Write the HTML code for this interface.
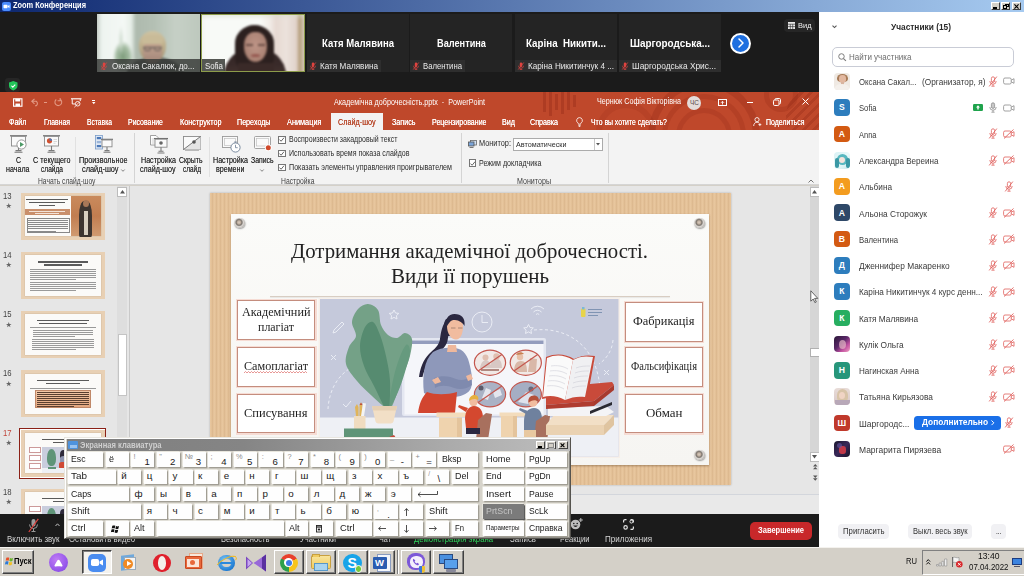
<!DOCTYPE html>
<html lang="ru">
<head>
<meta charset="utf-8">
<title>Zoom Конференция</title>
<style>
*{box-sizing:border-box;margin:0;padding:0}
html,body{width:1024px;height:576px;overflow:hidden;background:#d4d0c8}
body{font-family:"Liberation Sans","DejaVu Sans",sans-serif;font-size:8px;color:#222;position:relative}
.a{position:absolute}
.t{position:absolute;white-space:nowrap;line-height:1.15;transform-origin:0 50%}
svg{position:absolute;overflow:visible}

</style>
</head>
<body>

<div class="a" style="left:0;top:0;width:1024px;height:12px;background:linear-gradient(90deg,#0e2870 0%,#a6caf0 100%)"></div>
<svg style="left:2px;top:2px" width="9" height="9" viewBox="0 0 18 18"><rect width="18" height="18" rx="4" fill="#4a8cff"/><rect x="3" y="5.5" width="8" height="7" rx="1.5" fill="#fff"/><path d="M11.5 8l3.5-2.2v6.4L11.5 10z" fill="#fff"/></svg>
<span class="t" style="left:13.0px;top:1.3px;font-size:8.2px;color:#fff;font-weight:bold;transform:scaleX(0.907);">Zoom Конференция</span>
<div class="a" style="left:991px;top:2px;width:9px;height:8px;background:#d4d0c8;border:1px solid;border-color:#fff #404040 #404040 #fff"><div class="a" style="left:1px;top:4px;width:4px;height:1.5px;background:#000"></div></div>
<div class="a" style="left:1001px;top:2px;width:9px;height:8px;background:#d4d0c8;border:1px solid;border-color:#fff #404040 #404040 #fff"><div class="a" style="left:2.5px;top:0.5px;width:4px;height:3.5px;border:1px solid #000;border-top-width:1.5px"></div><div class="a" style="left:1px;top:2px;width:4px;height:3.5px;border:1px solid #000;border-top-width:1.5px;background:#d4d0c8"></div></div>
<div class="a" style="left:1012px;top:2px;width:9px;height:8px;background:#d4d0c8;border:1px solid;border-color:#fff #404040 #404040 #fff"><svg style="left:1px;top:0.5px" width="5" height="5" viewBox="0 0 6 6"><path d="M0.5 0.5L5.5 5.5M5.5 0.5L0.5 5.5" stroke="#000" stroke-width="1.4"/></svg></div>

<div class="a" style="left:0;top:12px;width:820px;height:80px;background:#1b1b1b"></div>
<!-- video 1 -->
<div class="a" style="left:97.300px;top:14.200px;width:103px;height:57.500px;overflow:hidden;background:#c0cbc0">
 <div class="a" style="left:-3px;top:-3px;width:110px;height:64px;filter:blur(1.2px);background:linear-gradient(90deg,#9aa49a 0,#c8d0c8 3px,#eef4f0 8px,#f4f8f5 30px,#e6eee8 37px,#aebaae 42px,#b4c0b4 60px,#c6d0c6 82px,#bcc7bc 110px)">
  <div class="a" style="left:19px;top:30px;width:20px;height:32px;border-radius:50%;background:radial-gradient(ellipse at center,#7e9c7c 0,#a4bca2 45%,rgba(220,232,222,0) 72%)"></div>
  <div class="a" style="left:24px;top:14px;width:6px;height:30px;background:radial-gradient(ellipse at center,#cfdccf 0,rgba(230,240,232,0) 70%)"></div>
  <div class="a" style="left:32px;top:46px;width:58px;height:24px;border-radius:50% 50% 0 0/80% 80% 0 0;background:#5f645f"></div>
  <div class="a" style="left:44.500px;top:19.500px;width:27.500px;height:31px;border-radius:50% 50% 42% 42%/45% 45% 55% 55%;background:linear-gradient(180deg,#cfc3a2 0,#c2b390 40%,#a39274 100%)"></div>
  <div class="a" style="left:48.500px;top:28.500px;width:19.500px;height:24px;border-radius:42% 42% 50% 50%;background:linear-gradient(180deg,#c4a58f,#b39585 55%,#a08476)"></div>
  <div class="a" style="left:47.500px;top:24px;width:21px;height:9px;border-radius:50% 50% 20% 20%;background:#c9bb98"></div>
  <div class="a" style="left:49px;top:35.500px;width:18.500px;height:1.500px;background:#5e5854"></div>
  <div class="a" style="left:50px;top:35.500px;width:7px;height:4.500px;border:.8px solid #5e5854;border-radius:1.500px"></div>
  <div class="a" style="left:59.500px;top:35.500px;width:7px;height:4.500px;border:.8px solid #5e5854;border-radius:1.500px"></div>
 </div>
 <div class="a" style="left:0;top:45px;width:103px;height:13px;background:rgba(54,56,54,.82)"></div>
</div>
<svg style="left:100px;top:61.8px" width="8" height="8" viewBox="0 0 16 16"><rect x="5.5" y="1" width="5" height="9" rx="2.5" fill="#e0433f"/><path d="M3 7.5a5 5 0 0 0 10 0M8 12.5V15M5.5 15h5" stroke="#e0433f" stroke-width="1.4" fill="none"/><path d="M13.5 1L2.5 15" stroke="#e0433f" stroke-width="1.6"/></svg>
<span class="t" style="left:112.0px;top:60.8px;font-size:8.9px;color:#ececec;transform:scaleX(0.905);">Оксана Сакалюк, до...</span>
<!-- video 2 -->
<div class="a" style="left:201px;top:14px;width:104px;height:58px;overflow:hidden;background:#f6f8f5">
 <div class="a" style="left:-3px;top:-3px;width:110px;height:64px;filter:blur(1.300px);background:linear-gradient(180deg,rgba(214,222,208,.9) 0,rgba(240,244,238,0) 9px),linear-gradient(90deg,#eef1ec 0,#f8faf7 8px,#f9faf8 62px,#f1ebe6 72px,#e6d9d2 78px,#ece2dc 88px,#e2d4cc 98px,#b49c78 102px,#c8b8a0 104px,#e4dcd4 110px)">
  <div class="a" style="left:26px;top:36px;width:62px;height:40px;border-radius:50% 50% 10% 10%/70% 70% 10% 10%;background:linear-gradient(180deg,#2f2322 0,#3a2b2a 45%,#4c3a32 100%)"></div>
  <div class="a" style="left:37px;top:13.500px;width:39px;height:46px;border-radius:50% 50% 30% 30%/40% 40% 30% 30%;background:#2c201f"></div>
  <div class="a" style="left:45.500px;top:20.500px;width:23.500px;height:30px;border-radius:44% 44% 50% 50%;background:radial-gradient(ellipse at 50% 45%,#bd9486 0,#ad8577 60%,#86604f 100%)"></div>
  <div class="a" style="left:47.500px;top:33px;width:7px;height:1.800px;background:#6e5048"></div><div class="a" style="left:59.500px;top:33px;width:7px;height:1.800px;background:#6e5048"></div>
  <div class="a" style="left:53px;top:43px;width:8.500px;height:3px;border-radius:50%;background:#965850"></div>
  <div class="a" style="left:40px;top:52px;width:36px;height:12px;background:#3a2a28"></div>
 </div>
 <div class="a" style="left:0;top:45px;width:24px;height:13px;background:rgba(62,64,60,.88)"></div>
 <div class="a" style="left:0;top:0;width:104px;height:58px;border:1px solid #8c9c4a"></div>
</div>
<span class="t" style="left:204.8px;top:60.8px;font-size:8.9px;color:#f0f0f0;transform:scaleX(0.890);">Sofia</span>
<div class="a" style="left:307px;top:14px;width:102px;height:58px;background:#242424"></div>
<div class="a" style="left:307px;top:60px;width:74px;height:12px;background:#2e2e2e"></div>
<svg style="left:309px;top:62px" width="8" height="8" viewBox="0 0 16 16"><rect x="5.5" y="1" width="5" height="9" rx="2.5" fill="#e0433f"/><path d="M3 7.5a5 5 0 0 0 10 0M8 12.5V15M5.5 15h5" stroke="#e0433f" stroke-width="1.4" fill="none"/><path d="M13.5 1L2.5 15" stroke="#e0433f" stroke-width="1.6"/></svg>
<span class="t" style="left:322.0px;top:37.3px;font-size:10.5px;color:#fff;font-weight:bold;transform:scaleX(0.909);">Катя Малявина</span>
<span class="t" style="left:320.0px;top:60.8px;font-size:8.9px;color:#e8e8e8;transform:scaleX(0.918);">Катя Малявина</span>
<div class="a" style="left:410px;top:14px;width:102px;height:58px;background:#242424"></div>
<div class="a" style="left:410px;top:60px;width:55px;height:12px;background:#2e2e2e"></div>
<svg style="left:412px;top:62px" width="8" height="8" viewBox="0 0 16 16"><rect x="5.5" y="1" width="5" height="9" rx="2.5" fill="#e0433f"/><path d="M3 7.5a5 5 0 0 0 10 0M8 12.5V15M5.5 15h5" stroke="#e0433f" stroke-width="1.4" fill="none"/><path d="M13.5 1L2.5 15" stroke="#e0433f" stroke-width="1.6"/></svg>
<span class="t" style="left:436.5px;top:37.3px;font-size:10.5px;color:#fff;font-weight:bold;transform:scaleX(0.876);">Валентина</span>
<span class="t" style="left:423.0px;top:60.8px;font-size:8.9px;color:#e8e8e8;transform:scaleX(0.872);">Валентина</span>
<div class="a" style="left:514.5px;top:14px;width:102.5px;height:58px;background:#242424"></div>
<div class="a" style="left:514.5px;top:60px;width:102.5px;height:12px;background:#2e2e2e"></div>
<svg style="left:516.5px;top:62px" width="8" height="8" viewBox="0 0 16 16"><rect x="5.5" y="1" width="5" height="9" rx="2.5" fill="#e0433f"/><path d="M3 7.5a5 5 0 0 0 10 0M8 12.5V15M5.5 15h5" stroke="#e0433f" stroke-width="1.4" fill="none"/><path d="M13.5 1L2.5 15" stroke="#e0433f" stroke-width="1.6"/></svg>
<span class="t" style="left:525.8px;top:37.3px;font-size:10.5px;color:#fff;font-weight:bold;transform:scaleX(0.932);">Каріна&nbsp; Никити...</span>
<span class="t" style="left:527.5px;top:60.8px;font-size:8.9px;color:#e8e8e8;transform:scaleX(0.918);">Каріна Никитинчук 4 ...</span>
<div class="a" style="left:619px;top:14px;width:102px;height:58px;background:#242424"></div>
<div class="a" style="left:619px;top:60px;width:102px;height:12px;background:#2e2e2e"></div>
<svg style="left:621px;top:62px" width="8" height="8" viewBox="0 0 16 16"><rect x="5.5" y="1" width="5" height="9" rx="2.5" fill="#e0433f"/><path d="M3 7.5a5 5 0 0 0 10 0M8 12.5V15M5.5 15h5" stroke="#e0433f" stroke-width="1.4" fill="none"/><path d="M13.5 1L2.5 15" stroke="#e0433f" stroke-width="1.6"/></svg>
<span class="t" style="left:630.0px;top:37.3px;font-size:10.5px;color:#fff;font-weight:bold;transform:scaleX(0.943);">Шаргородська...</span>
<span class="t" style="left:632.0px;top:60.8px;font-size:8.9px;color:#e8e8e8;transform:scaleX(0.943);">Шаргородська Хрис...</span>
<div class="a" style="left:730px;top:32.500px;width:21px;height:21px;border-radius:50%;background:#1e6fe0;border:2px solid #fff"></div>
<svg style="left:737px;top:38px" width="8" height="10" viewBox="0 0 8 10"><path d="M2 1l4 4-4 4" stroke="#fff" stroke-width="1.5" fill="none" stroke-linecap="round" stroke-linejoin="round"/></svg>
<div class="a" style="left:784px;top:19px;width:31px;height:13px;border-radius:4px;background:#262626"></div>
<svg style="left:787.5px;top:22px" width="7" height="7" viewBox="0 0 7 7"><rect width="7" height="7" fill="#e8e8e8"/><path d="M0 2.2h7M2.3 2.2v5M4.7 2.2v5M0 4.6h7" stroke="#262626" stroke-width=".6"/></svg>
<span class="t" style="left:797.5px;top:20.9px;font-size:8px;color:#f0f0f0;transform:scaleX(0.932);">Вид</span>
<!-- shield -->
<div class="a" style="left:5px;top:78px;width:15px;height:14px;border-radius:3px;background:#262626"></div>
<svg style="left:8.5px;top:81px" width="8.5" height="9.5" viewBox="0 0 9 10"><path d="M4.5 0L9 1.6v3.6c0 2.4-2 4.1-4.5 4.8C2 9.300 0 7.600 0 5.200V1.600z" fill="#23c55a"/><path d="M2.500 5l1.500 1.500 2.600-2.800" stroke="#fff" stroke-width="1.100" fill="none"/></svg>


<div class="a" style="left:0;top:92px;width:820px;height:38px;background:#bf482b;overflow:hidden">
  <!-- decorative pattern -->
  <div class="a" style="left:543px;top:0;width:3px;height:20px;background:rgba(140,36,18,.32)"></div>
  <div class="a" style="left:549px;top:0;width:3px;height:24px;background:rgba(140,36,18,.32)"></div>
  <div class="a" style="left:555px;top:2px;width:3px;height:16px;background:rgba(140,36,18,.32)"></div>
  <div class="a" style="left:561px;top:0;width:3px;height:22px;background:rgba(140,36,18,.32)"></div>
  <div class="a" style="left:567px;top:0;width:3px;height:18px;background:rgba(140,36,18,.32)"></div>
  <div class="a" style="left:573px;top:3px;width:3px;height:12px;background:rgba(140,36,18,.32)"></div>
  <div class="a" style="left:648px;top:-12px;width:112px;height:112px;border-radius:50%;border:7px solid rgba(140,36,18,.26)"></div>
  <div class="a" style="left:662px;top:2px;width:84px;height:84px;border-radius:50%;border:5px solid rgba(140,36,18,.22)"></div>
  <div class="a" style="left:676px;top:16px;width:56px;height:56px;border-radius:50%;border:5px solid rgba(140,36,18,.2)"></div>
  <div class="a" style="left:596px;top:10px;width:60px;height:60px;border-radius:50%;border:6px solid rgba(140,36,18,.16)"></div>
  <div class="a" style="left:764px;top:-14px;width:34px;height:34px;border-radius:50%;border:5px solid rgba(140,36,18,.22)"></div>
  <div class="a" style="left:786px;top:-6px;width:60px;height:60px;border-radius:50%;background:repeating-linear-gradient(135deg,rgba(140,36,18,.28) 0 3px,transparent 3px 7px)"></div>
</div>
<!-- quick access -->
<svg style="left:13px;top:98px" width="9.5" height="9" viewBox="0 0 10 9"><rect x=".6" y=".6" width="8.8" height="7.8" fill="none" stroke="#fff" stroke-width="1.2"/><rect x="2.4" y=".6" width="5.2" height="2.8" fill="#fff"/><rect x="2.6" y="5.6" width="4.8" height="2.8" fill="#fff"/></svg>
<svg style="left:31px;top:98px" width="9" height="8" viewBox="0 0 9 8"><path d="M3.5.8L.8 3.3l2.7 2.5M1 3.3h4.2a2.6 2.6 0 0 1 0 4.4H4" stroke="#e39a85" stroke-width="1.1" fill="none"/></svg>
<div class="a" style="left:44px;top:102px;width:2.5px;height:1px;background:#e39a85"></div>
<svg style="left:54px;top:97.5px" width="8.5" height="8.5" viewBox="0 0 9 9"><path d="M6.3 1.3A3.6 3.6 0 1 1 2.4 1.6M6.5 0v2.8H3.8" stroke="#e39a85" stroke-width="1.1" fill="none"/></svg>
<svg style="left:71px;top:97.5px" width="10.5" height="10" viewBox="0 0 11 10"><path d="M0 .6h11" stroke="#fff" stroke-width="1.2"/><path d="M1.3 1v5h3M9.7 1v2" stroke="#fff" stroke-width="1" fill="none"/><circle cx="7" cy="5.8" r="2.4" fill="none" stroke="#fff" stroke-width=".9"/><path d="M5.3 7.5L8.7 4.1M3.5 9.5l2-2" stroke="#fff" stroke-width=".8"/></svg>
<div class="a" style="left:91.5px;top:100.3px;width:3.5px;height:1px;background:#fff"></div>
<svg style="left:91.5px;top:102px" width="3.5" height="2.5" viewBox="0 0 4 3"><path d="M0 0h4L2 2.6z" fill="#fff"/></svg>
<span class="t" style="left:333.5px;top:97.5px;font-size:8.3px;color:#fff;transform:scaleX(0.867);">Академічна доброчесність.pptx&nbsp; -&nbsp; PowerPoint</span>
<span class="t" style="left:597.0px;top:97.0px;font-size:8.3px;color:#fff;transform:scaleX(0.865);">Чернюк Софія Вікторівна</span>
<div class="a" style="left:687px;top:95.5px;width:14px;height:14px;border-radius:50%;background:#e4dcda"></div>
<span class="t" style="left:689.9px;top:98.9px;font-size:6.4px;color:#5a4a48;">ЧС</span>
<svg style="left:718px;top:98.5px" width="9" height="7" viewBox="0 0 9 7"><rect x=".5" y=".5" width="8" height="6" fill="none" stroke="#fff" stroke-width="1"/><path d="M4.5 5.5v-3M3 3.8l1.5-1.5L6 3.8" stroke="#fff" stroke-width=".9" fill="none"/></svg>
<div class="a" style="left:747px;top:101.5px;width:6px;height:1px;background:#fff"></div>
<svg style="left:773px;top:98px" width="8" height="8" viewBox="0 0 8 8"><rect x=".5" y="2" width="5.5" height="5.5" rx="1.2" fill="none" stroke="#fff" stroke-width="1"/><path d="M2 2V1.7A1.2 1.2 0 0 1 3.2.5h3.1A1.2 1.2 0 0 1 7.5 1.7v3.1A1.2 1.2 0 0 1 6.3 6" fill="none" stroke="#fff" stroke-width="1"/></svg>
<svg style="left:802px;top:98px" width="7" height="7" viewBox="0 0 7 7"><path d="M.5.5l6 6M6.5.5l-6 6" stroke="#fff" stroke-width="1"/></svg>
<!-- tabs -->
<span class="t" style="left:9.0px;top:117.8px;font-size:8.3px;color:#fff;transform:scaleX(0.858);text-shadow:0 0 .5px #fff;">Файл</span>
<span class="t" style="left:44.0px;top:117.8px;font-size:8.3px;color:#fff;transform:scaleX(0.823);text-shadow:0 0 .5px #fff;">Главная</span>
<span class="t" style="left:86.5px;top:117.8px;font-size:8.3px;color:#fff;transform:scaleX(0.811);text-shadow:0 0 .5px #fff;">Вставка</span>
<span class="t" style="left:128.0px;top:117.8px;font-size:8.3px;color:#fff;transform:scaleX(0.837);text-shadow:0 0 .5px #fff;">Рисование</span>
<span class="t" style="left:179.5px;top:117.8px;font-size:8.3px;color:#fff;transform:scaleX(0.877);text-shadow:0 0 .5px #fff;">Конструктор</span>
<span class="t" style="left:237.0px;top:117.8px;font-size:8.3px;color:#fff;transform:scaleX(0.861);text-shadow:0 0 .5px #fff;">Переходы</span>
<span class="t" style="left:287.0px;top:117.8px;font-size:8.3px;color:#fff;transform:scaleX(0.886);text-shadow:0 0 .5px #fff;">Анимация</span>
<div class="a" style="left:330.5px;top:113px;width:52.5px;height:18px;background:#f3f3f3"></div>
<span class="t" style="left:338.0px;top:117.8px;font-size:8.3px;color:#b7472a;transform:scaleX(0.872);text-shadow:0 0 .5px #b7472a;">Слайд-шоу</span>
<span class="t" style="left:391.5px;top:117.8px;font-size:8.3px;color:#fff;transform:scaleX(0.863);text-shadow:0 0 .5px #fff;">Запись</span>
<span class="t" style="left:431.5px;top:117.8px;font-size:8.3px;color:#fff;transform:scaleX(0.851);text-shadow:0 0 .5px #fff;">Рецензирование</span>
<span class="t" style="left:502.0px;top:117.8px;font-size:8.3px;color:#fff;transform:scaleX(0.866);text-shadow:0 0 .5px #fff;">Вид</span>
<span class="t" style="left:530.0px;top:117.8px;font-size:8.3px;color:#fff;transform:scaleX(0.860);text-shadow:0 0 .5px #fff;">Справка</span>
<svg style="left:575.5px;top:116.5px" width="7" height="10" viewBox="0 0 7 10"><path d="M3.5.6a2.9 2.9 0 0 0-1.6 5.3c.3.3.5.7.5 1.3h2.2c0-.6.2-1 .5-1.3A2.9 2.9 0 0 0 3.5.6zM2.4 8.4h2.2M2.7 9.5h1.6" stroke="#fff" stroke-width=".8" fill="none"/></svg>
<span class="t" style="left:591.0px;top:117.8px;font-size:8.3px;color:#fff;transform:scaleX(0.828);text-shadow:0 0 .5px #fff;">Что вы хотите сделать?</span>
<svg style="left:753px;top:117px" width="9" height="9.5" viewBox="0 0 9 10"><circle cx="4" cy="2.8" r="2.2" fill="none" stroke="#fff" stroke-width=".9"/><path d="M.5 9.5c0-2.4 1.5-4 3.5-4 .8 0 1.5.2 2 .7M7 6.5v3M5.5 8h3" stroke="#fff" stroke-width=".9" fill="none"/></svg>
<span class="t" style="left:766.0px;top:117.8px;font-size:8.3px;color:#fff;transform:scaleX(0.840);text-shadow:0 0 .5px #fff;">Поделиться</span>
<!-- ribbon -->
<div class="a" style="left:0;top:130px;width:820px;height:55px;background:#f3f3f3;border-bottom:1px solid #d5d5d5"></div>
<svg style="left:10px;top:135px" width="17" height="18" viewBox="0 0 17 18"><path d="M0 .8h17" stroke="#6a6a6a" stroke-width="1.2"/><rect x="1.5" y="1.4" width="14" height="9.6" fill="#fafafa" stroke="#8a8a8a" stroke-width=".9"/><path d="M8.5 11v4.5M4.5 17.3h8M5.5 15.6h6" stroke="#7a7a7a" stroke-width="1.1"/><circle cx="11.5" cy="9.5" r="4.6" fill="#fff" stroke="#8a8a8a" stroke-width=".9"/><path d="M10 7l4 2.5-4 2.5z" fill="#4d9a67"/></svg>
<span class="t" style="left:16.0px;top:155.8px;font-size:8.3px;color:#333;transform:scaleX(0.833);text-shadow:0 0 .4px #555;">С</span>
<span class="t" style="left:6.2px;top:164.8px;font-size:8.3px;color:#333;transform:scaleX(0.857);text-shadow:0 0 .4px #555;">начала</span>
<svg style="left:43px;top:135px" width="17" height="18" viewBox="0 0 17 18"><path d="M0 .8h17" stroke="#6a6a6a" stroke-width="1.2"/><rect x="1.5" y="1.4" width="14" height="9.6" fill="#fafafa" stroke="#8a8a8a" stroke-width=".9"/><path d="M8.5 11v4.5M4.5 17.3h8M5.5 15.6h6" stroke="#7a7a7a" stroke-width="1.1"/><circle cx="6.5" cy="5.8" r="2.6" fill="#d0502f"/><path d="M6.5 5.8V3.2a2.6 2.6 0 0 1 2.6 2.6z" fill="#4a78b8"/><path d="M10.5 4.5h3.5M10.5 6.5h3.5M10.5 8.3h2" stroke="#c8c8c8" stroke-width=".7"/></svg>
<span class="t" style="left:32.5px;top:155.8px;font-size:8.3px;color:#333;transform:scaleX(0.866);text-shadow:0 0 .4px #555;">С текущего</span>
<span class="t" style="left:40.5px;top:164.8px;font-size:8.3px;color:#333;transform:scaleX(0.794);text-shadow:0 0 .4px #555;">слайда</span>
<div class="a" style="left:75px;top:137px;width:1px;height:40px;background:#e1e1e1"></div>
<svg style="left:95px;top:135px" width="18" height="18" viewBox="0 0 18 18"><rect x=".5" y=".5" width="7" height="13.5" fill="#dfe8f4" stroke="#7a9cc8" stroke-width=".8"/><rect x="1.8" y="2" width="4.4" height="2.2" fill="#4a78b8"/><rect x="1.8" y="6" width="4.4" height="2.2" fill="#9ab4d8"/><rect x="1.8" y="10" width="4.4" height="2.2" fill="#4a78b8"/><path d="M6 4.3h12" stroke="#6a6a6a" stroke-width="1.1"/><rect x="7" y="5" width="10" height="6.8" fill="#fafafa" stroke="#8a8a8a" stroke-width=".9"/><path d="M12 12v3.5M8.5 17.3h7M9.5 15.6h5" stroke="#7a7a7a" stroke-width="1.1"/></svg>
<span class="t" style="left:78.5px;top:155.8px;font-size:8.3px;color:#333;transform:scaleX(0.876);text-shadow:0 0 .4px #555;">Произвольное</span>
<span class="t" style="left:81.5px;top:164.8px;font-size:8.3px;color:#333;transform:scaleX(0.887);text-shadow:0 0 .4px #555;">слайд-шоу</span>
<svg style="left:120.5px;top:168.5px" width="4" height="3" viewBox="0 0 4 3"><path d="M.3.5L2 2.3 3.7.5" stroke="#555" stroke-width=".7" fill="none"/></svg>
<span class="t" style="left:38.0px;top:176.7px;font-size:8.3px;color:#3e3e3e;transform:scaleX(0.812);">Начать слайд-шоу</span>
<div class="a" style="left:133.5px;top:133px;width:1px;height:50px;background:#d4d4d4"></div>
<svg style="left:150px;top:134.5px" width="18" height="19" viewBox="0 0 18 19"><path d="M.5.5h5.5l2 2V10H.5z" fill="#fff" stroke="#8a8a8a" stroke-width=".8"/><path d="M1.8 4h3M1.8 6h3M1.8 8h3" stroke="#b0b0b0" stroke-width=".6"/><path d="M4 3.5h14" stroke="#6a6a6a" stroke-width="1.1"/><rect x="5" y="4.2" width="12" height="8" fill="#fafafa" stroke="#8a8a8a" stroke-width=".9"/><circle cx="11" cy="8" r="1.8" fill="#666"/><path d="M11 12.2v3.8M7.5 18h7M8.5 16.2h5" stroke="#7a7a7a" stroke-width="1.1"/></svg>
<span class="t" style="left:140.6px;top:155.8px;font-size:8.3px;color:#333;transform:scaleX(0.857);text-shadow:0 0 .4px #555;">Настройка</span>
<span class="t" style="left:140.1px;top:164.8px;font-size:8.3px;color:#333;transform:scaleX(0.862);text-shadow:0 0 .4px #555;">слайд-шоу</span>
<svg style="left:183px;top:136px" width="18" height="15" viewBox="0 0 18 15"><rect x=".5" y=".5" width="17" height="13" fill="#fafafa" stroke="#8a8a8a" stroke-width=".9"/><path d="M.5 13.5L17.5.5V13.5z" fill="#e4e4e4"/><path d="M.5 13.5L17.5.5" stroke="#6a6a6a" stroke-width=".9"/><circle cx="11" cy="6" r="1.8" fill="#555"/><path d="M2 14.5h14" stroke="#aaa" stroke-width=".8"/></svg>
<span class="t" style="left:179.4px;top:155.8px;font-size:8.3px;color:#333;transform:scaleX(0.830);text-shadow:0 0 .4px #555;">Скрыть</span>
<span class="t" style="left:182.6px;top:164.8px;font-size:8.3px;color:#333;transform:scaleX(0.779);text-shadow:0 0 .4px #555;">слайд</span>
<div class="a" style="left:208.5px;top:137px;width:1px;height:40px;background:#e1e1e1"></div>
<svg style="left:222px;top:136px" width="19" height="17" viewBox="0 0 19 17"><rect x=".5" y=".5" width="15" height="11" fill="#fafafa" stroke="#9a9a9a" stroke-width=".9"/><rect x="2.5" y="2.5" width="11" height="7" fill="none" stroke="#c0c0c0" stroke-width=".7"/><circle cx="13.5" cy="11.5" r="4.6" fill="#fff" stroke="#6c7e94" stroke-width=".9"/><path d="M13.5 8.8v2.9h2.2" stroke="#6c7e94" stroke-width=".8" fill="none"/><path d="M12.3 6h2.4" stroke="#6c7e94" stroke-width=".9"/></svg>
<span class="t" style="left:212.6px;top:155.8px;font-size:8.3px;color:#333;transform:scaleX(0.857);text-shadow:0 0 .4px #555;">Настройка</span>
<span class="t" style="left:215.9px;top:164.8px;font-size:8.3px;color:#333;transform:scaleX(0.859);text-shadow:0 0 .4px #555;">времени</span>
<svg style="left:254px;top:136px" width="18" height="16" viewBox="0 0 18 16"><rect x=".5" y=".5" width="16" height="12" rx="1" fill="#fafafa" stroke="#9a9a9a" stroke-width=".9"/><rect x="2.5" y="2.5" width="12" height="7.5" fill="none" stroke="#c0c0c0" stroke-width=".7"/><circle cx="14.3" cy="11.8" r="3.4" fill="#fff"/><circle cx="14.3" cy="11.8" r="2.5" fill="#d0492c"/></svg>
<span class="t" style="left:251.0px;top:155.8px;font-size:8.3px;color:#333;transform:scaleX(0.830);text-shadow:0 0 .4px #555;">Запись</span>
<svg style="left:260.4px;top:168.5px" width="4" height="3" viewBox="0 0 4 3"><path d="M.3.5L2 2.3 3.7.5" stroke="#555" stroke-width=".7" fill="none"/></svg>
<div class="a" style="left:278px;top:136.2px;width:7.6px;height:7.6px;border:1px solid #767676;background:#fff"></div><svg style="left:279.3px;top:137.4px" width="5.5" height="5" viewBox="0 0 6 5"><path d="M.5 2.6l1.8 1.8L5.5.5" stroke="#444" stroke-width=".9" fill="none"/></svg><span class="t" style="left:289.0px;top:135.4px;font-size:8.3px;color:#2b2b2b;transform:scaleX(0.844);">Воспроизвести закадровый текст</span>
<div class="a" style="left:278px;top:149.89999999999998px;width:7.6px;height:7.6px;border:1px solid #767676;background:#fff"></div><svg style="left:279.3px;top:151.1px" width="5.5" height="5" viewBox="0 0 6 5"><path d="M.5 2.6l1.8 1.8L5.5.5" stroke="#444" stroke-width=".9" fill="none"/></svg><span class="t" style="left:289.0px;top:149.1px;font-size:8.3px;color:#2b2b2b;transform:scaleX(0.848);">Использовать время показа слайдов</span>
<div class="a" style="left:278px;top:163.6px;width:7.6px;height:7.6px;border:1px solid #767676;background:#fff"></div><svg style="left:279.3px;top:164.8px" width="5.5" height="5" viewBox="0 0 6 5"><path d="M.5 2.6l1.8 1.8L5.5.5" stroke="#444" stroke-width=".9" fill="none"/></svg><span class="t" style="left:289.0px;top:162.8px;font-size:8.3px;color:#2b2b2b;transform:scaleX(0.860);">Показать элементы управления проигрывателем</span>
<span class="t" style="left:280.5px;top:176.7px;font-size:8.3px;color:#3e3e3e;transform:scaleX(0.820);">Настройка</span>
<div class="a" style="left:461px;top:133px;width:1px;height:50px;background:#d4d4d4"></div>
<svg style="left:468px;top:139.5px" width="9" height="8" viewBox="0 0 9 8"><rect x="2.5" y=".5" width="6" height="4.5" fill="#cfe0f4" stroke="#6a6a6a" stroke-width=".8"/><rect x=".5" y="2" width="5.5" height="4" fill="#7aa4d8" stroke="#555" stroke-width=".8"/><path d="M1.5 7.5h4" stroke="#555" stroke-width=".8"/></svg>
<span class="t" style="left:479.0px;top:139.0px;font-size:8.3px;color:#2b2b2b;transform:scaleX(0.887);">Монитор:</span>
<div class="a" style="left:513px;top:137.5px;width:90px;height:13.5px;background:#fff;border:1px solid #ababab"></div>
<div class="a" style="left:594px;top:138.5px;width:1px;height:11.5px;background:#c8c8c8"></div>
<svg style="left:596.3px;top:143px" width="4" height="2.5" viewBox="0 0 4 2.5"><path d="M0 0h4L2 2.5z" fill="#555"/></svg>
<span class="t" style="left:516.0px;top:139.5px;font-size:8.1px;color:#2b2b2b;transform:scaleX(0.892);">Автоматически</span>
<div class="a" style="left:468.5px;top:159.39999999999998px;width:7.6px;height:7.6px;border:1px solid #767676;background:#fff"></div><svg style="left:469.8px;top:160.6px" width="5.5" height="5" viewBox="0 0 6 5"><path d="M.5 2.6l1.8 1.8L5.5.5" stroke="#444" stroke-width=".9" fill="none"/></svg><span class="t" style="left:479.0px;top:158.6px;font-size:8.3px;color:#2b2b2b;transform:scaleX(0.859);">Режим докладчика</span>
<span class="t" style="left:517.0px;top:176.7px;font-size:8.3px;color:#3e3e3e;transform:scaleX(0.856);">Мониторы</span>
<div class="a" style="left:608px;top:133px;width:1px;height:50px;background:#d4d4d4"></div>
<svg style="left:808px;top:179px" width="6" height="4" viewBox="0 0 6 4"><path d="M.5 3.5L3 1l2.5 2.5" stroke="#555" stroke-width=".8" fill="none"/></svg>


<div class="a" style="left:0;top:186px;width:820px;height:334px;background:#e6e6e6"></div>
<div class="a" style="left:116.5px;top:186px;width:10.5px;height:334px;background:#dedede"></div>
<div class="a" style="left:128.7px;top:186px;width:1px;height:334px;background:#c9c9c9"></div>
<div class="a" style="left:117px;top:187px;width:10px;height:9.5px;background:#fff;border:1px solid #bcbcbc"></div>
<svg style="left:119.5px;top:190px" width="5" height="3.5" viewBox="0 0 5 3.5"><path d="M0 3.5L2.5 0 5 3.5z" fill="#555"/></svg>
<div class="a" style="left:117.5px;top:334px;width:9px;height:62px;background:#fff;border:1px solid #c4c4c4"></div>
<span class="t" style="left:3.0px;top:190.5px;font-size:9.2px;color:#444;transform:scaleX(0.840);">13</span><svg style="left:6px;top:203.1px" width="5.5" height="5.5" viewBox="0 0 10 10"><path d="M5 0l1.3 3.5H10L7 5.8 8.1 9.5 5 7.3 1.9 9.5 3 5.8 0 3.5h3.7z" fill="#666"/></svg><div class="a" style="left:21.2px;top:192.6px;width:83.6px;height:47.2px;background:#e8d0b4;overflow:hidden"><div class="a" style="left:3.6px;top:3.4px;width:76.4px;height:40.4px;background:#fbfaf8;box-shadow:0 0 1px rgba(0,0,0,.25)"></div><div class="a" style="left:0;top:0;width:84px;height:48px;filter:blur(.35px)"><div class="a" style="left:5px;top:6px;width:42px;height:1.2px;background:#5a5a5a"></div><div class="a" style="left:8px;top:9px;width:36px;height:1.2px;background:#5a5a5a"></div><div class="a" style="left:18px;top:12px;width:16px;height:1.2px;background:#5a5a5a"></div>
<div class="a" style="left:4px;top:16px;width:45px;height:6.5px;background:#c98f6c"></div><div class="a" style="left:8px;top:18px;width:36px;height:1px;background:#f3e3d8"></div><div class="a" style="left:14px;top:20px;width:24px;height:1px;background:#f3e3d8"></div>
<div class="a" style="left:5.5px;top:25.5px;width:43px;height:15px;border:.6px solid #888"></div><div class="a" style="left:7px;top:27.5px;width:40px;height:0.8px;background:#8a8a8a"></div><div class="a" style="left:7px;top:29.6px;width:40px;height:0.8px;background:#8a8a8a"></div><div class="a" style="left:7px;top:31.7px;width:40px;height:0.8px;background:#8a8a8a"></div><div class="a" style="left:7px;top:33.8px;width:40px;height:0.8px;background:#8a8a8a"></div><div class="a" style="left:7px;top:35.9px;width:40px;height:0.8px;background:#8a8a8a"></div><div class="a" style="left:7px;top:38px;width:28px;height:0.8px;background:#8a8a8a"></div>
<div class="a" style="left:50px;top:3.4px;width:30px;height:40.4px;background:linear-gradient(180deg,#c98a5c,#c17d50 50%,#d09a70)"></div>
<div class="a" style="left:58px;top:8px;width:13px;height:36px;border-radius:40% 40% 10% 10%;background:#3d3530"></div><div class="a" style="left:61.5px;top:7px;width:6px;height:7px;border-radius:50%;background:#a87858"></div><div class="a" style="left:63px;top:18px;width:3.5px;height:24px;background:#d8cfc0"></div></div></div>
<span class="t" style="left:3.0px;top:249.7px;font-size:9.2px;color:#444;transform:scaleX(0.840);">14</span><svg style="left:6px;top:262.3px" width="5.5" height="5.5" viewBox="0 0 10 10"><path d="M5 0l1.3 3.5H10L7 5.8 8.1 9.5 5 7.3 1.9 9.5 3 5.8 0 3.5h3.7z" fill="#666"/></svg><div class="a" style="left:21.2px;top:251.8px;width:83.6px;height:47.2px;background:#e8d0b4;overflow:hidden"><div class="a" style="left:3.6px;top:3.4px;width:76.4px;height:40.4px;background:#fbfaf8;box-shadow:0 0 1px rgba(0,0,0,.25)"></div><div class="a" style="left:0;top:0;width:84px;height:48px;filter:blur(.35px)"><div class="a" style="left:16.799999999999997px;top:9.5px;width:50px;height:1.3px;background:#5a5a5a"></div><div class="a" style="left:22.799999999999997px;top:12.7px;width:38px;height:1.3px;background:#5a5a5a"></div><div class="a" style="left:9px;top:17px;width:66px;height:.6px;background:#999"></div><div class="a" style="left:9px;top:19px;width:66px;height:0.8px;background:#9a9a9a"></div><div class="a" style="left:9px;top:21px;width:66px;height:0.8px;background:#9a9a9a"></div><div class="a" style="left:9px;top:23px;width:66px;height:0.8px;background:#9a9a9a"></div><div class="a" style="left:9px;top:25px;width:66px;height:0.8px;background:#9a9a9a"></div><div class="a" style="left:9px;top:27px;width:46.199999999999996px;height:0.8px;background:#9a9a9a"></div><div class="a" style="left:9px;top:30px;width:66px;height:0.8px;background:#9a9a9a"></div><div class="a" style="left:9px;top:32px;width:66px;height:0.8px;background:#9a9a9a"></div><div class="a" style="left:9px;top:34px;width:66px;height:0.8px;background:#9a9a9a"></div><div class="a" style="left:9px;top:36px;width:66px;height:0.8px;background:#9a9a9a"></div><div class="a" style="left:9px;top:38px;width:46.199999999999996px;height:0.8px;background:#9a9a9a"></div></div></div>
<span class="t" style="left:3.0px;top:308.9px;font-size:9.2px;color:#444;transform:scaleX(0.840);">15</span><svg style="left:6px;top:321.5px" width="5.5" height="5.5" viewBox="0 0 10 10"><path d="M5 0l1.3 3.5H10L7 5.8 8.1 9.5 5 7.3 1.9 9.5 3 5.8 0 3.5h3.7z" fill="#666"/></svg><div class="a" style="left:21.2px;top:311px;width:83.6px;height:47.2px;background:#e8d0b4;overflow:hidden"><div class="a" style="left:3.6px;top:3.4px;width:76.4px;height:40.4px;background:#fbfaf8;box-shadow:0 0 1px rgba(0,0,0,.25)"></div><div class="a" style="left:0;top:0;width:84px;height:48px;filter:blur(.35px)"><div class="a" style="left:15.799999999999997px;top:8.5px;width:52px;height:1.3px;background:#5a5a5a"></div><div class="a" style="left:17.799999999999997px;top:11.7px;width:48px;height:1.3px;background:#5a5a5a"></div><div class="a" style="left:9px;top:16px;width:66px;height:.6px;background:#999"></div><div class="a" style="left:12px;top:18.5px;width:60px;height:0.8px;background:#9a9a9a"></div><div class="a" style="left:12px;top:20.5px;width:60px;height:0.8px;background:#9a9a9a"></div><div class="a" style="left:12px;top:22.5px;width:60px;height:0.8px;background:#9a9a9a"></div><div class="a" style="left:12px;top:24.5px;width:42px;height:0.8px;background:#9a9a9a"></div><div class="a" style="left:11px;top:27.5px;width:62px;height:0.8px;background:#9a9a9a"></div><div class="a" style="left:11px;top:29.5px;width:62px;height:0.8px;background:#9a9a9a"></div><div class="a" style="left:11px;top:31.5px;width:62px;height:0.8px;background:#9a9a9a"></div><div class="a" style="left:11px;top:33.5px;width:62px;height:0.8px;background:#9a9a9a"></div><div class="a" style="left:11px;top:35.5px;width:62px;height:0.8px;background:#9a9a9a"></div><div class="a" style="left:11px;top:37.5px;width:43.4px;height:0.8px;background:#9a9a9a"></div></div></div>
<span class="t" style="left:3.0px;top:368.1px;font-size:9.2px;color:#444;transform:scaleX(0.840);">16</span><svg style="left:6px;top:380.7px" width="5.5" height="5.5" viewBox="0 0 10 10"><path d="M5 0l1.3 3.5H10L7 5.8 8.1 9.5 5 7.3 1.9 9.5 3 5.8 0 3.5h3.7z" fill="#666"/></svg><div class="a" style="left:21.2px;top:370.2px;width:83.6px;height:47.2px;background:#e8d0b4;overflow:hidden"><div class="a" style="left:3.6px;top:3.4px;width:76.4px;height:40.4px;background:#fbfaf8;box-shadow:0 0 1px rgba(0,0,0,.25)"></div><div class="a" style="left:0;top:0;width:84px;height:48px;filter:blur(.35px)"><div class="a" style="left:15.799999999999997px;top:9.5px;width:52px;height:1.3px;background:#5a5a5a"></div><div class="a" style="left:24.799999999999997px;top:12.7px;width:34px;height:1.3px;background:#5a5a5a"></div><div class="a" style="left:9px;top:17.5px;width:66px;height:.6px;background:#999"></div><div class="a" style="left:14px;top:20px;width:56px;height:18px;background:linear-gradient(180deg,#f3c9a8,#e2a67e);border:.5px solid #c08868"></div><div class="a" style="left:16px;top:21.5px;width:52px;height:0.8px;background:#5a4030"></div><div class="a" style="left:16px;top:23.5px;width:52px;height:0.8px;background:#5a4030"></div><div class="a" style="left:16px;top:25.5px;width:52px;height:0.8px;background:#5a4030"></div><div class="a" style="left:16px;top:27.5px;width:52px;height:0.8px;background:#5a4030"></div><div class="a" style="left:16px;top:29.5px;width:52px;height:0.8px;background:#5a4030"></div><div class="a" style="left:16px;top:31.5px;width:52px;height:0.8px;background:#5a4030"></div><div class="a" style="left:16px;top:33.5px;width:52px;height:0.8px;background:#5a4030"></div><div class="a" style="left:16px;top:35.5px;width:36.4px;height:0.8px;background:#5a4030"></div></div></div>
<span class="t" style="left:3.0px;top:427.5px;font-size:9.2px;color:#c0453a;transform:scaleX(0.840);">17</span><svg style="left:6px;top:440.1px" width="5.5" height="5.5" viewBox="0 0 10 10"><path d="M5 0l1.3 3.5H10L7 5.8 8.1 9.5 5 7.3 1.9 9.5 3 5.8 0 3.5h3.7z" fill="#666"/></svg><div class="a" style="left:19.2px;top:428px;width:87.2px;height:51px;border:1.6px solid #8b2016;background:#fff"></div><div class="a" style="left:21.2px;top:429.6px;width:83.6px;height:47.2px;background:#e8d0b4;overflow:hidden"><div class="a" style="left:3.6px;top:3.4px;width:76.4px;height:40.4px;background:#fbfaf8;box-shadow:0 0 1px rgba(0,0,0,.25)"></div><div class="a" style="left:0;top:0;width:84px;height:48px;filter:blur(.35px)"><div class="a" style="left:21px;top:9px;width:42px;height:1.1px;background:#5a5a5a"></div><div class="a" style="left:32px;top:12px;width:20px;height:1.1px;background:#5a5a5a"></div>
<div class="a" style="left:7.5px;top:17px;width:12px;height:6.5px;border:.7px solid #c99;background:#fff"></div><div class="a" style="left:7.5px;top:25px;width:12px;height:6.5px;border:.7px solid #c99;background:#fff"></div><div class="a" style="left:7.5px;top:33px;width:12px;height:6.5px;border:.7px solid #c99;background:#fff"></div>
<div class="a" style="left:21px;top:17px;width:48px;height:26px;background:#c9cddd"></div>
<div class="a" style="left:26px;top:19px;width:9px;height:17px;border-radius:50% 50% 40% 40%;background:#5f9478"></div>
<div class="a" style="left:39px;top:20px;width:7px;height:9px;border-radius:50% 50% 30% 30%;background:#2e2a3a"></div><div class="a" style="left:38.5px;top:26px;width:9px;height:8px;border-radius:40%;background:#8d94b0"></div><div class="a" style="left:38px;top:32px;width:9px;height:7px;border-radius:30%;background:#d04a34"></div>
<div class="a" style="left:21px;top:38px;width:48px;height:5px;background:#eef0f4"></div><div class="a" style="left:27px;top:37.5px;width:8px;height:2px;background:#5f9478"></div></div></div>
<span class="t" style="left:3.0px;top:486.7px;font-size:9.2px;color:#444;transform:scaleX(0.840);">18</span><svg style="left:6px;top:499.3px" width="5.5" height="5.5" viewBox="0 0 10 10"><path d="M5 0l1.3 3.5H10L7 5.8 8.1 9.5 5 7.3 1.9 9.5 3 5.8 0 3.5h3.7z" fill="#666"/></svg><div class="a" style="left:21.2px;top:488.8px;width:83.6px;height:47.2px;background:#e8d0b4;overflow:hidden"><div class="a" style="left:3.6px;top:3.4px;width:76.4px;height:40.4px;background:#fbfaf8;box-shadow:0 0 1px rgba(0,0,0,.25)"></div><div class="a" style="left:0;top:0;width:84px;height:48px;filter:blur(.35px)"><div class="a" style="left:21px;top:9px;width:42px;height:1.1px;background:#5a5a5a"></div><div class="a" style="left:32px;top:12px;width:20px;height:1.1px;background:#5a5a5a"></div>
<div class="a" style="left:7.5px;top:17px;width:12px;height:6.5px;border:.7px solid #c99;background:#fff"></div><div class="a" style="left:7.5px;top:25px;width:12px;height:6.5px;border:.7px solid #c99;background:#fff"></div><div class="a" style="left:7.5px;top:33px;width:12px;height:6.5px;border:.7px solid #c99;background:#fff"></div>
<div class="a" style="left:21px;top:17px;width:48px;height:26px;background:#c9cddd"></div>
<div class="a" style="left:26px;top:19px;width:9px;height:17px;border-radius:50% 50% 40% 40%;background:#5f9478"></div>
<div class="a" style="left:39px;top:20px;width:7px;height:9px;border-radius:50% 50% 30% 30%;background:#2e2a3a"></div><div class="a" style="left:38.5px;top:26px;width:9px;height:8px;border-radius:40%;background:#8d94b0"></div><div class="a" style="left:38px;top:32px;width:9px;height:7px;border-radius:30%;background:#d04a34"></div>
<div class="a" style="left:21px;top:38px;width:48px;height:5px;background:#eef0f4"></div><div class="a" style="left:27px;top:37.5px;width:8px;height:2px;background:#5f9478"></div></div></div>
<!-- main area scrollbar -->
<div class="a" style="left:809.5px;top:186px;width:10px;height:276px;background:#d6d6d6"></div>
<div class="a" style="left:810px;top:187px;width:9.5px;height:9.5px;background:#fff;border:1px solid #bcbcbc"></div>
<svg style="left:812.3px;top:190px" width="5" height="3.5" viewBox="0 0 5 3.5"><path d="M0 3.5L2.5 0 5 3.5z" fill="#555"/></svg>
<div class="a" style="left:810px;top:347.5px;width:9.5px;height:9.5px;background:#fff;border:1px solid #b0b0b0"></div>
<div class="a" style="left:810px;top:452px;width:9.5px;height:9.5px;background:#fff;border:1px solid #bcbcbc"></div>
<svg style="left:812.3px;top:455.3px" width="5" height="3.5" viewBox="0 0 5 3.5"><path d="M0 0L2.5 3.5 5 0z" fill="#555"/></svg>
<svg style="left:812.5px;top:464px" width="4.5" height="5.8" viewBox="0 0 5.5 7"><path d="M0 3L2.75 0 5.5 3zM0 6.5L2.75 3.5 5.5 6.5z" fill="#555"/></svg>
<svg style="left:812.5px;top:475px" width="4.5" height="5.8" viewBox="0 0 5.5 7"><path d="M0 .5L2.75 3.5 5.5 .5zM0 4L2.75 7 5.5 4z" fill="#555"/></svg>
<div class="a" style="left:130px;top:494.2px;width:690px;height:1px;background:#d3d6dc"></div><div class="a" style="left:130px;top:495.2px;width:690px;height:19px;background:#e9e9e9"></div>
<svg style="left:810px;top:290px" width="9" height="13" viewBox="0 0 9 13"><path d="M.8.8v10.4l2.4-2.2 1.7 3.6 1.4-.7-1.7-3.5h3.2z" fill="#fff" stroke="#444" stroke-width=".8"/></svg>
<!-- slide -->
<div class="a" style="left:209.5px;top:193px;width:521px;height:292px;background:repeating-linear-gradient(90deg,#e9c8a0 0,#e5c39a 1.3px,#dcb88e 2.3px,#e2bf96 3.3px,#e9c8a0 4px);box-shadow:0 0 2px rgba(0,0,0,.25)"></div>
<div class="a" style="left:230.5px;top:214px;width:478.5px;height:250.5px;background:linear-gradient(180deg,#fbfbf9,#f6f5f2);box-shadow:0 .5px 2px rgba(90,60,30,.45)"></div>
<div class="a" style="left:234.1px;top:217.5px;width:10.6px;height:10.6px;border-radius:50%;background:radial-gradient(circle at 46% 44%,#d9cec2 0,#bfae9e 20%,#7f7770 34%,#8f8a84 40%,#dedad6 52%,#bcb8b4 70%,#8a8682 92%,#7a7672 100%);box-shadow:.5px 1px 1.5px rgba(0,0,0,.35)"></div><div class="a" style="left:694.1px;top:217.5px;width:10.6px;height:10.6px;border-radius:50%;background:radial-gradient(circle at 46% 44%,#d9cec2 0,#bfae9e 20%,#7f7770 34%,#8f8a84 40%,#dedad6 52%,#bcb8b4 70%,#8a8682 92%,#7a7672 100%);box-shadow:.5px 1px 1.5px rgba(0,0,0,.35)"></div><div class="a" style="left:694.1px;top:449.9px;width:10.6px;height:10.6px;border-radius:50%;background:radial-gradient(circle at 46% 44%,#d9cec2 0,#bfae9e 20%,#7f7770 34%,#8f8a84 40%,#dedad6 52%,#bcb8b4 70%,#8a8682 92%,#7a7672 100%);box-shadow:.5px 1px 1.5px rgba(0,0,0,.35)"></div>
<span class="t" style="left:291.0px;top:239.7px;font-size:20.6px;color:#222;font-family:'Liberation Serif','DejaVu Serif',serif;transform:scaleX(1.010);">Дотримання академічної доброчесності.</span>
<span class="t" style="left:391.0px;top:264.5px;font-size:20.6px;color:#222;font-family:'Liberation Serif','DejaVu Serif',serif;transform:scaleX(1.019);">Види її порушень</span>


<div class="a" style="left:0;top:514px;width:820px;height:33.5px;background:#1b1b1b"></div>
<svg style="left:27.5px;top:517.5px" width="11" height="15" viewBox="0 0 11 15"><rect x="3.5" y="1" width="4" height="7.5" rx="2" fill="#9a9a9a"/><path d="M1.5 6.5a4 4 0 0 0 8 0M5.5 10.5v2.5M3.5 13.5h4" stroke="#9a9a9a" stroke-width="1" fill="none"/><path d="M10.3.8L.8 14" stroke="#e0433f" stroke-width="1.2"/></svg>
<svg style="left:54.5px;top:522.5px" width="5" height="3.5" viewBox="0 0 5 3.5"><path d="M.5 3L2.5.8 4.5 3" stroke="#ccc" stroke-width=".9" fill="none"/></svg>
<span class="t" style="left:6.8px;top:534.7px;font-size:8.4px;color:#d6d6d6;transform:scaleX(0.940);">Включить звук</span>
<span class="t" style="left:69.0px;top:534.7px;font-size:8.4px;color:#d6d6d6;transform:scaleX(0.925);">Остановить видео</span>
<span class="t" style="left:220.8px;top:534.7px;font-size:8.4px;color:#d6d6d6;transform:scaleX(0.908);">Безопасность</span>
<span class="t" style="left:299.5px;top:534.7px;font-size:8.4px;color:#d6d6d6;transform:scaleX(0.900);">Участники</span>
<span class="t" style="left:378.5px;top:534.7px;font-size:8.4px;color:#d6d6d6;transform:scaleX(0.863);">Чат</span>
<span class="t" style="left:414.0px;top:534.7px;font-size:8.4px;color:#2fd25a;transform:scaleX(0.923);">Демонстрация экрана</span>
<span class="t" style="left:510.0px;top:534.7px;font-size:8.4px;color:#d6d6d6;transform:scaleX(0.946);">Запись</span>
<span class="t" style="left:559.8px;top:534.7px;font-size:8.4px;color:#d6d6d6;transform:scaleX(0.912);">Реакции</span>
<span class="t" style="left:605.0px;top:534.7px;font-size:8.4px;color:#d6d6d6;transform:scaleX(0.959);">Приложения</span>
<svg style="left:570px;top:517.5px" width="13" height="12" viewBox="0 0 13 12"><circle cx="5.5" cy="6.5" r="4.8" fill="#bdbdbd"/><circle cx="3.8" cy="5.5" r=".8" fill="#1b1b1b"/><circle cx="7.2" cy="5.5" r=".8" fill="#1b1b1b"/><path d="M3.2 7.6a2.6 2.6 0 0 0 4.6 0z" fill="#1b1b1b"/><path d="M10.8 0v4M8.8 2h4" stroke="#bdbdbd" stroke-width="1"/></svg>
<svg style="left:622.5px;top:519px" width="11" height="11" viewBox="0 0 11 11"><path d="M.6 3.5V2A1.4 1.4 0 0 1 2 .6h1.5M7.5.6H9A1.4 1.4 0 0 1 10.4 2v1.5M10.4 7.5V9A1.4 1.4 0 0 1 9 10.4H7.5" stroke="#e4e4e4" stroke-width="1.2" fill="none"/><circle cx="2.6" cy="8.4" r="1.7" fill="none" stroke="#e4e4e4" stroke-width="1.2"/><circle cx="8.4" cy="2.6" r="1.5" fill="none" stroke="#e4e4e4" stroke-width="1"/></svg>
<div class="a" style="left:750px;top:522px;width:61.5px;height:17.5px;border-radius:5px;background:#c8282a"></div>
<span class="t" style="left:757.8px;top:526.1px;font-size:8.6px;color:#fff;font-weight:bold;transform:scaleX(0.875);">Завершение</span>


<div class="a" style="left:270px;top:295.8px;width:400px;height:1px;background:#d8cdc2;box-shadow:0 1px 1px rgba(0,0,0,.08)"></div>
<div class="a" style="left:235.5px;top:298.6px;width:81px;height:42.4px;background:#f6dcd4"></div><div class="a" style="left:236.7px;top:299.8px;width:78.6px;height:40px;background:#fff;border:1.1px solid #c48d7e"></div><span class="t" style="left:241.8px;top:305.2px;font-size:12.8px;color:#1e1e1e;font-family:'Liberation Serif','DejaVu Serif',serif;transform:scaleX(0.954);">Академічний</span><span class="t" style="left:258.0px;top:320.2px;font-size:12.8px;color:#1e1e1e;font-family:'Liberation Serif','DejaVu Serif',serif;transform:scaleX(0.931);">плагіат</span>
<div class="a" style="left:235.5px;top:345.8px;width:81px;height:42px;background:#f6dcd4"></div><div class="a" style="left:236.7px;top:347px;width:78.6px;height:39.6px;background:#fff;border:1.1px solid #c48d7e"></div><span class="t" style="left:244.0px;top:359.0px;font-size:12.8px;color:#1e1e1e;font-family:'Liberation Serif','DejaVu Serif',serif;transform:scaleX(0.950);">Самоплагіат</span>
<svg style="left:244px;top:370.5px" width="64" height="3" viewBox="0 0 64 3"><path d="M0 2l1.5-1.5L3 2l1.5-1.5L6 2l1.5-1.5L9 2l1.5-1.5L12 2l1.5-1.5L15 2l1.5-1.5L18 2l1.5-1.5L21 2l1.5-1.5L24 2l1.5-1.5L27 2l1.5-1.5L30 2l1.5-1.5L33 2l1.5-1.5L36 2l1.5-1.5L39 2l1.5-1.5L42 2l1.5-1.5L45 2l1.5-1.5L48 2l1.5-1.5L51 2l1.5-1.5L54 2l1.5-1.5L57 2l1.5-1.5L60 2l1.5-1.5L63 2" stroke="#d9534f" stroke-width=".6" fill="none"/></svg>
<div class="a" style="left:235.5px;top:392.5px;width:81px;height:42px;background:#f6dcd4"></div><div class="a" style="left:236.7px;top:393.7px;width:78.6px;height:39.6px;background:#fff;border:1.1px solid #c48d7e"></div><span class="t" style="left:244.2px;top:405.6px;font-size:12.8px;color:#1e1e1e;font-family:'Liberation Serif','DejaVu Serif',serif;transform:scaleX(0.973);">Списування</span>
<div class="a" style="left:624px;top:301px;width:80px;height:42px;background:#f6dcd4"></div><div class="a" style="left:625.2px;top:302.2px;width:77.6px;height:39.6px;background:#fff;border:1.1px solid #c48d7e"></div><span class="t" style="left:633.2px;top:314.1px;font-size:12.8px;color:#1e1e1e;font-family:'Liberation Serif','DejaVu Serif',serif;transform:scaleX(0.968);">Фабрикація</span>
<div class="a" style="left:624px;top:345.8px;width:80px;height:42px;background:#f6dcd4"></div><div class="a" style="left:625.2px;top:347px;width:77.6px;height:39.6px;background:#fff;border:1.1px solid #c48d7e"></div><span class="t" style="left:631.0px;top:359.5px;font-size:12px;color:#1e1e1e;font-family:'Liberation Serif','DejaVu Serif',serif;transform:scaleX(0.874);">Фальсифікація</span>
<div class="a" style="left:624px;top:392.5px;width:80px;height:42px;background:#f6dcd4"></div><div class="a" style="left:625.2px;top:393.7px;width:77.6px;height:39.6px;background:#fff;border:1.1px solid #c48d7e"></div><span class="t" style="left:645.8px;top:405.6px;font-size:12.8px;color:#1e1e1e;font-family:'Liberation Serif','DejaVu Serif',serif;transform:scaleX(1.009);">Обман</span>
<svg style="left:0;top:0" width="1024" height="576" viewBox="0 0 1024 576">
<defs><clipPath id="ic"><rect x="320" y="299" width="298.5" height="157.5"/></clipPath></defs>
<rect x="318.5" y="297.5" width="301.5" height="160.5" fill="#f6efe9"/>
<g clip-path="url(#ic)">
<rect x="320" y="299" width="299" height="160" fill="#c5c9db"/>
<rect x="320" y="417.5" width="299" height="42" fill="#eef0f5"/>
<!-- doodles -->
<g stroke="#eef0f7" stroke-width="1" fill="none" opacity=".9">
<path d="M334 330l8-8 2 2-8 8-3 1z"/><path d="M331 355l5 5M336 355l-5 5"/><path d="M349 369c-12 8-20 22-21 40" stroke-dasharray="3 2.5"/><path d="M343 404l3 3 5-6"/>
<path d="M394 310l1.5 3 3.3.4-2.4 2.3.6 3.3-3-1.6-3 1.6.6-3.3-2.4-2.3 3.3-.4z"/>
<circle cx="482" cy="322" r="10"/><path d="M482 315v7.5h6"/>
<path d="M531 309a9 9 0 0 1 13 0M533.5 312a5.5 5.5 0 0 1 8 0M536 314.5a2.2 2.2 0 0 1 3.2 0"/>
<path d="M528.5 324.5l1.5 3 3.3.4-2.4 2.3.6 3.3-3-1.6-3 1.6.6-3.3-2.4-2.3 3.3-.4z"/>
<path d="M534 330c30-3 62 12 66 58" stroke-dasharray="3 2.5"/><path d="M613 340c-1 12-8 20-14 24" stroke-dasharray="3 2.5"/>
<path d="M604 370l5 5M609 370l-5 5"/>
</g>
<rect x="581" y="308.5" width="4.5" height="8.5" rx="1" fill="#e8d44a"/><rect x="582" y="307" width="2.5" height="2.5" fill="#7cb8d8"/>
<path d="M588 309.5h14M588 312.5h14M588 315.5h10" stroke="#6f86a8" stroke-width=".8"/>
<!-- screen -->
<rect x="402" y="338" width="144" height="78" rx="2" fill="#e4e7f1"/>
<rect x="404.5" y="340.5" width="139" height="74" fill="#f5f6fa"/>
<rect x="404.5" y="340.5" width="139" height="3.5" fill="#939cbd"/>
<!-- plant -->
<path d="M386 408C382.8 406 376.8 400.5 372 396C367.2 391.5 361.3 386.3 357 381C352.7 375.7 347.3 369.7 346 364C344.7 358.3 347.3 351.7 349 347C350.7 342.3 355.5 340.2 356 336C356.5 331.8 351.7 326.5 352 322C352.3 317.5 355.3 312 358 309C360.7 306 364.7 303.8 368 304C371.3 304.2 375.8 306.5 378 310C380.2 313.5 379.3 320.8 381 325C382.7 329.2 385.3 332.8 388 335C390.7 337.2 394.2 338.3 397 338C399.8 337.7 402.5 332.8 405 333C407.5 333.2 411.2 335.2 412 339C412.8 342.8 411.3 350.3 410 356C408.7 361.7 406 367.2 404 373C402 378.8 400.2 385.2 398 391C395.8 396.8 393 405.2 391 408C389 410.8 389.2 410 386 408z" fill="#74a187"/>
<path d="M389 408C388 406.8 390.5 392.7 392 385C393.5 377.3 395.7 368.7 398 362C400.3 355.3 404 346.7 406 345C408 343.3 410.2 347.5 410 352C409.8 356.5 407 365.3 405 372C403 378.7 400.7 386 398 392C395.3 398 390 409.2 389 408z" fill="#669a7e"/>
<path d="M385 408C382.5 404.3 377.5 393 374 386C370.5 379 366.3 372.7 364 366C361.7 359.3 359.8 352.5 360 346C360.2 339.5 362.8 331 365 327C367.2 323 370.5 320.7 373 322C375.5 323.3 377.8 329.3 380 335C382.2 340.7 384.3 348.3 386 356C387.7 363.7 389.5 372.3 390 381C390.5 389.7 389.8 403.5 389 408C388.2 412.5 387.5 411.7 385 408z" fill="#568b70"/>
<path d="M372 406h25l-3.5 15.5a3 3 0 0 1-3 2h-12a3 3 0 0 1-3-2z" fill="#f2dfc6"/><path d="M372 406h25l-1 4.5h-23z" fill="#e6cfb2"/>
<!-- pencil cup -->
<path d="M356 416l-1-9 2-3 1.5 3v9zM359.5 416v-11l1.5-2.5 1.5 2.5v11z" fill="#e0b45a"/><path d="M361 416l2-13 3 .5-2 12.5z" fill="#f4f4f4"/><path d="M359.5 405l1.5-2.5 1.5 2.5z" fill="#c0503c"/>
<path d="M354 416h11.5v11.5a3 3 0 0 1-3 3h-5.5a3 3 0 0 1-3-3z" fill="#f0dcc0"/>
<path d="M344 428.5h49v9h-49z" fill="#5f9478"/><path d="M389 437l5-2 2 3z" fill="#c44a3a"/>
<g><clipPath id="c490362"><ellipse cx="490" cy="362.7" rx="15.6" ry="12.6"/></clipPath><ellipse cx="490" cy="362.7" rx="15.6" ry="12.6" fill="#f1e9e6"/><g clip-path="url(#c490362)"><path d="M480 368c1-6 4-8 6-8s5 3 5 8zM490 368c1-7 4-9 7-9s5 3 5 9z" fill="#d8c8c4"/><circle cx="485.5" cy="357.5" r="3" fill="#e0bfb0"/><circle cx="496.5" cy="356.5" r="3.2" fill="#e0bfb0"/><path d="M481 370h18" stroke="#b08880" stroke-width="2"/></g><ellipse cx="490" cy="362.7" rx="15.6" ry="12.6" fill="none" stroke="#c4574e" stroke-width="1.2"/><path d="M478.144 371.01599999999996L501.856 354.384" stroke="#c4574e" stroke-width="1.2"/></g>
<g><clipPath id="c525362"><ellipse cx="525.8" cy="362.7" rx="15.6" ry="12.6"/></clipPath><ellipse cx="525.8" cy="362.7" rx="15.6" ry="12.6" fill="#f1e9e6"/><g clip-path="url(#c525362)"><path d="M514 372c0-8 3-11 7-11s6 3 6 11zM528 372l2-14 7 1-1 13z" fill="#d9b8a8"/><circle cx="520" cy="357" r="3.2" fill="#e8c0a8"/><path d="M516 355c1-3 6-4 8-1z" fill="#c88050"/></g><ellipse cx="525.8" cy="362.7" rx="15.6" ry="12.6" fill="none" stroke="#c4574e" stroke-width="1.2"/><path d="M513.944 371.01599999999996L537.656 354.384" stroke="#c4574e" stroke-width="1.2"/></g>
<g><clipPath id="c490394"><ellipse cx="490" cy="394.3" rx="15.6" ry="12.6"/></clipPath><ellipse cx="490" cy="394.3" rx="15.6" ry="12.6" fill="#f1e9e6"/><g clip-path="url(#c490394)"><rect x="474" y="381" width="32" height="27" fill="#aab2c5"/><path d="M482 398l4-10 5 2-3 10zM493 392l7-3 2 6-7 3z" fill="#e4e6ee"/><circle cx="481" cy="388" r="2.5" fill="#5a5a6a"/></g><ellipse cx="490" cy="394.3" rx="15.6" ry="12.6" fill="none" stroke="#c4574e" stroke-width="1.2"/><path d="M478.144 402.616L501.856 385.98400000000004" stroke="#c4574e" stroke-width="1.2"/></g>
<g><clipPath id="c525394"><ellipse cx="525.8" cy="394.3" rx="15.6" ry="12.6"/></clipPath><ellipse cx="525.8" cy="394.3" rx="15.6" ry="12.6" fill="#f1e9e6"/><g clip-path="url(#c525394)"><rect x="510" y="381" width="32" height="27" fill="#a5aec3"/><path d="M518 402l8-10 8 3-6 9z" fill="#dfe2ec"/><circle cx="531" cy="389" r="2.6" fill="#6a6a7a"/></g><ellipse cx="525.8" cy="394.3" rx="15.6" ry="12.6" fill="none" stroke="#c4574e" stroke-width="1.2"/><path d="M513.944 402.616L537.656 385.98400000000004" stroke="#c4574e" stroke-width="1.2"/></g>
<!-- woman -->
<path d="M447 320c-5 5-6 12-7 19-1 7-6 10-11 15-6 6-9 15-10 23l3.5 0c2-8 5-15 11-20 6-5 12-9 14-16 1-5 1-11 3-15z" fill="#2a2740"/><path d="M446 336c-3-6-3-13 0-17l4 0v17z" fill="#2a2740"/>
<path d="M424 393c-2-16 0-33 9-41 6-4 14-5 22-4 9 1 13 8 15 18 2 9 3 16 1 22-2 5-8 8-16 9-12 2-23 1-31-4z" fill="#8e98ba"/>
<path d="M448 345h8l1 7h-10z" fill="#efb89c"/>
<path d="M447 326c0-6 3.5-9.5 8-9.5 5 0 8 4 8 10 0 7-2.5 13-7 13-5 0-9-6-9-13.5z" fill="#f1bc9f"/>
<path d="M445.5 329c-2-9 3-15 9-15 7 0 11 4 10 12-3-5-7-6-11-6-3 0-5.5 4-8 9z" fill="#2a2740"/>
<path d="M451 328h4.5M458 328h4.5" stroke="#9a7a6a" stroke-width=".8"/>
<path d="M434 378c8-3 16-2 22 1 5 2 10 1 14-2l2 8c-5 4-12 5-18 3-7-3-14-3-19 0z" fill="#7f8aae"/>
<path d="M432 380l6-3 3 5-6 2zM466 376l5-2 2 5-5 2z" fill="#efb89c"/>
<path d="M427 392c8 3 20 3 30 0l-2 21h-37c1-9 4-16 9-21z" fill="#d2452f"/>
<!-- left desk + student -->
<path d="M436.5 412.5h43.5v4.5h-43.5z" fill="#f3dcbc"/><path d="M439 417.5h18v22h-18z" fill="#efd3ae"/><path d="M457 417.5h5v22h-5z" fill="#e4c49c"/>
<circle cx="473.5" cy="402" r="4.2" fill="#f1bc9f"/><path d="M469 401c0-4 3-6.5 6-6 3 .5 4 3 3 5-3-2-6-1-9 1z" fill="#e6b040"/>
<path d="M465 419c0-8 4-13 9-13 6 0 9 5 9 12v10h-17z" fill="#d4482f"/><path d="M466 412l-8-5 1-2 9 3z" fill="#d4482f"/>
<path d="M478 420l8-7 6 1-4 26h-12z" fill="#a8705e"/><path d="M466 428h14v6h-14z" fill="#2a2740"/>
<!-- right desk + student -->
<path d="M499.5 412.5h27.5v4h-27.5z" fill="#f3dcbc"/><path d="M501 416h12v24h-12z" fill="#efd3ae"/><path d="M513 416h4v24h-4z" fill="#e4c49c"/>
<circle cx="533" cy="402.5" r="4.3" fill="#f1bc9f"/><path d="M528.5 403c-1-5 2-8 6-7.5 3.5.5 5 3 4 6.5-3-3-7-2-10.5 1z" fill="#b4503a"/>
<path d="M524 421c0-8 4-13 10-13s8 5 8 12v10h-18z" fill="#6f819e"/><path d="M526 414l-7-4 1-2 8 3z" fill="#6f819e"/>
<path d="M536 421l9-6 5 1-3 26h-13z" fill="#a8705e"/><path d="M524 430h12v10h-12z" fill="#e8c8a0"/>
<!-- books -->
<path d="M546 425l8-10h60l-10 10z" fill="#f2dfc6"/><path d="M546 425h58v10h-58z" fill="#ead2b2"/><path d="M604 425l10-10v10l-10 10z" fill="#dfc4a0"/>
<path d="M548 408l58-2 8 6-8 4h-58z" fill="#f4f4f6"/><path d="M590 411l22-9v3l-22 9z" fill="#2a2a32"/>
<path d="M546 388l66-6 2 3-20 16-48 4z" fill="#c94a3a"/><path d="M546 405l48-4v5l-48 3z" fill="#b03c30"/><path d="M594 401l20-16v5l-20 16z" fill="#a83a2e"/>
<path d="M546 357c10-4 20-3 28 2 8-4 14-4 21-3l-8 44c-7-2-14-1-21 3-8-5-16-6-24-4z" fill="#c94a3a"/>
<path d="M547 358c9-4 18-3 26 2l-8 40c-7-4-15-5-22-3z" fill="#fafafa"/><path d="M573 360c7-4 13-4 20-3l-8 40c-7-1-13 0-20 3z" fill="#f0f0f2"/>
<path d="M551 366c6-1 12 0 17 3M550 371c6-1 12 0 17 3M549 376c6-1 12 0 17 3M548 381c6-1 12 0 17 3M547 386c6-1 12 0 17 3M576 368c5-2 9-2 14-2M575 373c5-2 9-2 14-2M574 378c5-2 9-2 14-2M573 383c5-2 9-2 14-2M572 388c5-2 9-2 14-2" stroke="#cfcfd6" stroke-width=".6" fill="none"/>
</g></svg>


<div class="a" style="left:64.3px;top:437.4px;width:507px;height:101.6px;background:#d6d3ca;border:1px solid;border-color:#e8e6e0 #55534e #55534e #e8e6e0;box-shadow:inset 1px 1px 0 #fff,inset -1px -1px 0 #8c8a84"></div>
<div class="a" style="left:66.5px;top:439.4px;width:503px;height:11.4px;background:linear-gradient(90deg,#7e7e7e 0,#858585 35%,#aaa 75%,#bebebe 100%)"></div>
<div class="a" style="left:68.2px;top:441.3px;width:9.6px;height:8px;background:#4f93dd;border-radius:1px"></div><div class="a" style="left:69.5px;top:445px;width:7px;height:2.5px;background:#9cc4f0"></div>
<span class="t" style="left:79.5px;top:440.5px;font-size:8.4px;color:#cfcfcf;font-weight:bold;transform:scaleX(0.908);">Экранная клавиатура</span>
<div class="a" style="left:535.8px;top:441.3px;width:9.6px;height:8px;background:#d4d0c8;border:1px solid;border-color:#fff #404040 #404040 #fff"><div class="a" style="left:1.5px;top:4px;width:4px;height:1.5px;background:#000"></div></div>
<div class="a" style="left:546px;top:441.3px;width:9.6px;height:8px;background:#d4d0c8;border:1px solid;border-color:#fff #404040 #404040 #fff"><div class="a" style="left:1.2px;top:.6px;width:5.5px;height:4.8px;border:1px solid #8a8a8a;border-top-width:1.5px;box-shadow:.6px .6px 0 #fff"></div></div>
<div class="a" style="left:557.8px;top:441.3px;width:10px;height:8px;background:#d4d0c8;border:1px solid;border-color:#fff #404040 #404040 #fff"><svg style="left:1.3px;top:.7px" width="5" height="4.6" viewBox="0 0 6 6"><path d="M.5.5L5.5 5.5M5.5.5L.5 5.5" stroke="#000" stroke-width="1.5"/></svg></div>
<div class="a" style="left:67.8px;top:452.4px;width:35.2px;height:14.6px;background:#fefefe;box-shadow:1.3px 1.3px 0 #a19e94,-.6px -.6px 0 #f4f2ec"></div><span class="t" style="left:71.0px;top:453.1px;font-size:9.8px;color:#1a1a1a;transform:scaleX(0.887);">Esc</span><div class="a" style="left:105.6px;top:452.4px;width:23.3px;height:14.6px;background:#fefefe;box-shadow:1.3px 1.3px 0 #a19e94,-.6px -.6px 0 #f4f2ec"></div><span class="t" style="left:108.8px;top:453.1px;font-size:9.8px;color:#1a1a1a;transform:scaleX(0.917);">ё</span><div class="a" style="left:131.2px;top:452.4px;width:23.3px;height:14.6px;background:#fefefe;box-shadow:1.3px 1.3px 0 #a19e94,-.6px -.6px 0 #f4f2ec"></div><span class="t" style="left:133.6px;top:452.5px;font-size:7.4px;color:#8a8a8a;">!</span><span class="t" style="left:144.4px;top:456.2px;font-size:9.6px;color:#1a1a1a;">1</span><div class="a" style="left:156.8px;top:452.4px;width:23.3px;height:14.6px;background:#fefefe;box-shadow:1.3px 1.3px 0 #a19e94,-.6px -.6px 0 #f4f2ec"></div><span class="t" style="left:159.2px;top:452.5px;font-size:7.4px;color:#8a8a8a;">"</span><span class="t" style="left:170.0px;top:456.2px;font-size:9.6px;color:#1a1a1a;">2</span><div class="a" style="left:182.5px;top:452.4px;width:23.3px;height:14.6px;background:#fefefe;box-shadow:1.3px 1.3px 0 #a19e94,-.6px -.6px 0 #f4f2ec"></div><span class="t" style="left:184.9px;top:452.5px;font-size:7.4px;color:#8a8a8a;">№</span><span class="t" style="left:195.7px;top:456.2px;font-size:9.6px;color:#1a1a1a;">3</span><div class="a" style="left:208.1px;top:452.4px;width:23.3px;height:14.6px;background:#fefefe;box-shadow:1.3px 1.3px 0 #a19e94,-.6px -.6px 0 #f4f2ec"></div><span class="t" style="left:210.5px;top:452.5px;font-size:7.4px;color:#8a8a8a;">;</span><span class="t" style="left:221.3px;top:456.2px;font-size:9.6px;color:#1a1a1a;">4</span><div class="a" style="left:233.7px;top:452.4px;width:23.3px;height:14.6px;background:#fefefe;box-shadow:1.3px 1.3px 0 #a19e94,-.6px -.6px 0 #f4f2ec"></div><span class="t" style="left:236.1px;top:452.5px;font-size:7.4px;color:#8a8a8a;">%</span><span class="t" style="left:246.9px;top:456.2px;font-size:9.6px;color:#1a1a1a;">5</span><div class="a" style="left:259.4px;top:452.4px;width:23.3px;height:14.6px;background:#fefefe;box-shadow:1.3px 1.3px 0 #a19e94,-.6px -.6px 0 #f4f2ec"></div><span class="t" style="left:261.8px;top:452.5px;font-size:7.4px;color:#8a8a8a;">:</span><span class="t" style="left:272.6px;top:456.2px;font-size:9.6px;color:#1a1a1a;">6</span><div class="a" style="left:285px;top:452.4px;width:23.3px;height:14.6px;background:#fefefe;box-shadow:1.3px 1.3px 0 #a19e94,-.6px -.6px 0 #f4f2ec"></div><span class="t" style="left:287.4px;top:452.5px;font-size:7.4px;color:#8a8a8a;">?</span><span class="t" style="left:298.2px;top:456.2px;font-size:9.6px;color:#1a1a1a;">7</span><div class="a" style="left:310.6px;top:452.4px;width:23.3px;height:14.6px;background:#fefefe;box-shadow:1.3px 1.3px 0 #a19e94,-.6px -.6px 0 #f4f2ec"></div><span class="t" style="left:313.0px;top:452.5px;font-size:7.4px;color:#8a8a8a;">*</span><span class="t" style="left:323.8px;top:456.2px;font-size:9.6px;color:#1a1a1a;">8</span><div class="a" style="left:336.2px;top:452.4px;width:23.3px;height:14.6px;background:#fefefe;box-shadow:1.3px 1.3px 0 #a19e94,-.6px -.6px 0 #f4f2ec"></div><span class="t" style="left:338.6px;top:452.5px;font-size:7.4px;color:#8a8a8a;">(</span><span class="t" style="left:349.4px;top:456.2px;font-size:9.6px;color:#1a1a1a;">9</span><div class="a" style="left:361.9px;top:452.4px;width:23.3px;height:14.6px;background:#fefefe;box-shadow:1.3px 1.3px 0 #a19e94,-.6px -.6px 0 #f4f2ec"></div><span class="t" style="left:364.3px;top:452.5px;font-size:7.4px;color:#8a8a8a;">)</span><span class="t" style="left:375.1px;top:456.2px;font-size:9.6px;color:#1a1a1a;">0</span><div class="a" style="left:387.5px;top:452.4px;width:23.3px;height:14.6px;background:#fefefe;box-shadow:1.3px 1.3px 0 #a19e94,-.6px -.6px 0 #f4f2ec"></div><span class="t" style="left:389.9px;top:452.5px;font-size:7.4px;color:#8a8a8a;">_</span><span class="t" style="left:400.7px;top:456.2px;font-size:9.6px;color:#1a1a1a;">-</span><div class="a" style="left:413.1px;top:452.4px;width:23.3px;height:14.6px;background:#fefefe;box-shadow:1.3px 1.3px 0 #a19e94,-.6px -.6px 0 #f4f2ec"></div><span class="t" style="left:415.5px;top:452.5px;font-size:7.4px;color:#8a8a8a;">+</span><span class="t" style="left:426.3px;top:456.2px;font-size:9.6px;color:#1a1a1a;">=</span><div class="a" style="left:438.4px;top:452.4px;width:39.2px;height:14.6px;background:#fefefe;box-shadow:1.3px 1.3px 0 #a19e94,-.6px -.6px 0 #f4f2ec"></div><span class="t" style="left:441.6px;top:453.1px;font-size:9.8px;color:#1a1a1a;transform:scaleX(0.895);">Bksp</span><div class="a" style="left:483px;top:452.4px;width:40.5px;height:14.6px;background:#fefefe;box-shadow:1.3px 1.3px 0 #a19e94,-.6px -.6px 0 #f4f2ec"></div><span class="t" style="left:486.2px;top:453.1px;font-size:9.8px;color:#1a1a1a;transform:scaleX(0.937);">Home</span><div class="a" style="left:525.8px;top:452.4px;width:41.6px;height:14.6px;background:#fefefe;box-shadow:1.3px 1.3px 0 #a19e94,-.6px -.6px 0 #f4f2ec"></div><span class="t" style="left:529.0px;top:453.1px;font-size:9.8px;color:#1a1a1a;transform:scaleX(0.877);">PgUp</span><div class="a" style="left:67.8px;top:469.6px;width:47.8px;height:14.6px;background:#fefefe;box-shadow:1.3px 1.3px 0 #a19e94,-.6px -.6px 0 #f4f2ec"></div><span class="t" style="left:71.0px;top:470.3px;font-size:9.8px;color:#1a1a1a;transform:scaleX(1.013);">Tab</span><div class="a" style="left:118px;top:469.6px;width:23.3px;height:14.6px;background:#fefefe;box-shadow:1.3px 1.3px 0 #a19e94,-.6px -.6px 0 #f4f2ec"></div><span class="t" style="left:121.2px;top:470.3px;font-size:9.8px;color:#1a1a1a;">й</span><div class="a" style="left:143.6px;top:469.6px;width:23.3px;height:14.6px;background:#fefefe;box-shadow:1.3px 1.3px 0 #a19e94,-.6px -.6px 0 #f4f2ec"></div><span class="t" style="left:146.8px;top:470.3px;font-size:9.8px;color:#1a1a1a;">ц</span><div class="a" style="left:169.3px;top:469.6px;width:23.3px;height:14.6px;background:#fefefe;box-shadow:1.3px 1.3px 0 #a19e94,-.6px -.6px 0 #f4f2ec"></div><span class="t" style="left:172.5px;top:470.3px;font-size:9.8px;color:#1a1a1a;">у</span><div class="a" style="left:194.9px;top:469.6px;width:23.3px;height:14.6px;background:#fefefe;box-shadow:1.3px 1.3px 0 #a19e94,-.6px -.6px 0 #f4f2ec"></div><span class="t" style="left:198.1px;top:470.3px;font-size:9.8px;color:#1a1a1a;">к</span><div class="a" style="left:220.5px;top:469.6px;width:23.3px;height:14.6px;background:#fefefe;box-shadow:1.3px 1.3px 0 #a19e94,-.6px -.6px 0 #f4f2ec"></div><span class="t" style="left:223.7px;top:470.3px;font-size:9.8px;color:#1a1a1a;">е</span><div class="a" style="left:246.2px;top:469.6px;width:23.3px;height:14.6px;background:#fefefe;box-shadow:1.3px 1.3px 0 #a19e94,-.6px -.6px 0 #f4f2ec"></div><span class="t" style="left:249.3px;top:470.3px;font-size:9.8px;color:#1a1a1a;">н</span><div class="a" style="left:271.8px;top:469.6px;width:23.3px;height:14.6px;background:#fefefe;box-shadow:1.3px 1.3px 0 #a19e94,-.6px -.6px 0 #f4f2ec"></div><span class="t" style="left:275.0px;top:470.3px;font-size:9.8px;color:#1a1a1a;">г</span><div class="a" style="left:297.4px;top:469.6px;width:23.3px;height:14.6px;background:#fefefe;box-shadow:1.3px 1.3px 0 #a19e94,-.6px -.6px 0 #f4f2ec"></div><span class="t" style="left:300.6px;top:470.3px;font-size:9.8px;color:#1a1a1a;">ш</span><div class="a" style="left:323px;top:469.6px;width:23.3px;height:14.6px;background:#fefefe;box-shadow:1.3px 1.3px 0 #a19e94,-.6px -.6px 0 #f4f2ec"></div><span class="t" style="left:326.2px;top:470.3px;font-size:9.8px;color:#1a1a1a;">щ</span><div class="a" style="left:348.7px;top:469.6px;width:23.3px;height:14.6px;background:#fefefe;box-shadow:1.3px 1.3px 0 #a19e94,-.6px -.6px 0 #f4f2ec"></div><span class="t" style="left:351.9px;top:470.3px;font-size:9.8px;color:#1a1a1a;">з</span><div class="a" style="left:374.3px;top:469.6px;width:23.3px;height:14.6px;background:#fefefe;box-shadow:1.3px 1.3px 0 #a19e94,-.6px -.6px 0 #f4f2ec"></div><span class="t" style="left:377.5px;top:470.3px;font-size:9.8px;color:#1a1a1a;">х</span><div class="a" style="left:399.9px;top:469.6px;width:23.3px;height:14.6px;background:#fefefe;box-shadow:1.3px 1.3px 0 #a19e94,-.6px -.6px 0 #f4f2ec"></div><span class="t" style="left:403.1px;top:470.3px;font-size:9.8px;color:#1a1a1a;">ъ</span><div class="a" style="left:425.6px;top:469.6px;width:23.3px;height:14.6px;background:#fefefe;box-shadow:1.3px 1.3px 0 #a19e94,-.6px -.6px 0 #f4f2ec"></div><span class="t" style="left:428.2px;top:469.7px;font-size:6.6px;color:#8c8c8c;">/</span><span class="t" style="left:437.6px;top:473.0px;font-size:9.6px;color:#1a1a1a;">\</span><div class="a" style="left:451.5px;top:469.6px;width:26.1px;height:14.6px;background:#fefefe;box-shadow:1.3px 1.3px 0 #a19e94,-.6px -.6px 0 #f4f2ec"></div><span class="t" style="left:454.7px;top:470.3px;font-size:9.8px;color:#1a1a1a;transform:scaleX(0.918);">Del</span><div class="a" style="left:483px;top:469.6px;width:40.5px;height:14.6px;background:#fefefe;box-shadow:1.3px 1.3px 0 #a19e94,-.6px -.6px 0 #f4f2ec"></div><span class="t" style="left:486.2px;top:470.3px;font-size:9.8px;color:#1a1a1a;transform:scaleX(0.889);">End</span><div class="a" style="left:525.8px;top:469.6px;width:41.6px;height:14.6px;background:#fefefe;box-shadow:1.3px 1.3px 0 #a19e94,-.6px -.6px 0 #f4f2ec"></div><span class="t" style="left:529.0px;top:470.3px;font-size:9.8px;color:#1a1a1a;transform:scaleX(0.877);">PgDn</span><div class="a" style="left:67.8px;top:486.8px;width:61px;height:14.6px;background:#fefefe;box-shadow:1.3px 1.3px 0 #a19e94,-.6px -.6px 0 #f4f2ec"></div><span class="t" style="left:71.0px;top:487.5px;font-size:9.8px;color:#1a1a1a;transform:scaleX(0.896);">Caps</span><div class="a" style="left:131.2px;top:486.8px;width:23.3px;height:14.6px;background:#fefefe;box-shadow:1.3px 1.3px 0 #a19e94,-.6px -.6px 0 #f4f2ec"></div><span class="t" style="left:134.4px;top:487.5px;font-size:9.8px;color:#1a1a1a;">ф</span><div class="a" style="left:156.8px;top:486.8px;width:23.3px;height:14.6px;background:#fefefe;box-shadow:1.3px 1.3px 0 #a19e94,-.6px -.6px 0 #f4f2ec"></div><span class="t" style="left:160.0px;top:487.5px;font-size:9.8px;color:#1a1a1a;">ы</span><div class="a" style="left:182.5px;top:486.8px;width:23.3px;height:14.6px;background:#fefefe;box-shadow:1.3px 1.3px 0 #a19e94,-.6px -.6px 0 #f4f2ec"></div><span class="t" style="left:185.7px;top:487.5px;font-size:9.8px;color:#1a1a1a;">в</span><div class="a" style="left:208.1px;top:486.8px;width:23.3px;height:14.6px;background:#fefefe;box-shadow:1.3px 1.3px 0 #a19e94,-.6px -.6px 0 #f4f2ec"></div><span class="t" style="left:211.3px;top:487.5px;font-size:9.8px;color:#1a1a1a;">а</span><div class="a" style="left:233.7px;top:486.8px;width:23.3px;height:14.6px;background:#fefefe;box-shadow:1.3px 1.3px 0 #a19e94,-.6px -.6px 0 #f4f2ec"></div><span class="t" style="left:236.9px;top:487.5px;font-size:9.8px;color:#1a1a1a;">п</span><div class="a" style="left:259.4px;top:486.8px;width:23.3px;height:14.6px;background:#fefefe;box-shadow:1.3px 1.3px 0 #a19e94,-.6px -.6px 0 #f4f2ec"></div><span class="t" style="left:262.6px;top:487.5px;font-size:9.8px;color:#1a1a1a;">р</span><div class="a" style="left:285px;top:486.8px;width:23.3px;height:14.6px;background:#fefefe;box-shadow:1.3px 1.3px 0 #a19e94,-.6px -.6px 0 #f4f2ec"></div><span class="t" style="left:288.2px;top:487.5px;font-size:9.8px;color:#1a1a1a;">о</span><div class="a" style="left:310.6px;top:486.8px;width:23.3px;height:14.6px;background:#fefefe;box-shadow:1.3px 1.3px 0 #a19e94,-.6px -.6px 0 #f4f2ec"></div><span class="t" style="left:313.8px;top:487.5px;font-size:9.8px;color:#1a1a1a;">л</span><div class="a" style="left:336.2px;top:486.8px;width:23.3px;height:14.6px;background:#fefefe;box-shadow:1.3px 1.3px 0 #a19e94,-.6px -.6px 0 #f4f2ec"></div><span class="t" style="left:339.4px;top:487.5px;font-size:9.8px;color:#1a1a1a;">д</span><div class="a" style="left:361.9px;top:486.8px;width:23.3px;height:14.6px;background:#fefefe;box-shadow:1.3px 1.3px 0 #a19e94,-.6px -.6px 0 #f4f2ec"></div><span class="t" style="left:365.1px;top:487.5px;font-size:9.8px;color:#1a1a1a;">ж</span><div class="a" style="left:387.5px;top:486.8px;width:23.3px;height:14.6px;background:#fefefe;box-shadow:1.3px 1.3px 0 #a19e94,-.6px -.6px 0 #f4f2ec"></div><span class="t" style="left:390.7px;top:487.5px;font-size:9.8px;color:#1a1a1a;">э</span><div class="a" style="left:413.2px;top:486.8px;width:64.4px;height:14.6px;background:#fefefe;box-shadow:1.3px 1.3px 0 #a19e94,-.6px -.6px 0 #f4f2ec"></div><svg style="left:417px;top:490.5px" width="21" height="6" viewBox="0 0 21 6"><path d="M20.5 0v3.5H1M3.5 1.3L1 3.5 3.5 5.7" stroke="#222" stroke-width=".8" fill="none"/></svg><div class="a" style="left:483px;top:486.8px;width:40.5px;height:14.6px;background:#fefefe;box-shadow:1.3px 1.3px 0 #a19e94,-.6px -.6px 0 #f4f2ec"></div><span class="t" style="left:486.2px;top:487.5px;font-size:9.8px;color:#1a1a1a;transform:scaleX(1.020);">Insert</span><div class="a" style="left:525.8px;top:486.8px;width:41.6px;height:14.6px;background:#fefefe;box-shadow:1.3px 1.3px 0 #a19e94,-.6px -.6px 0 #f4f2ec"></div><span class="t" style="left:529.0px;top:487.5px;font-size:9.8px;color:#1a1a1a;transform:scaleX(0.882);">Pause</span><div class="a" style="left:67.8px;top:504px;width:73.2px;height:14.6px;background:#fefefe;box-shadow:1.3px 1.3px 0 #a19e94,-.6px -.6px 0 #f4f2ec"></div><span class="t" style="left:71.0px;top:504.7px;font-size:9.8px;color:#1a1a1a;transform:scaleX(0.943);">Shift</span><div class="a" style="left:143.6px;top:504px;width:23.3px;height:14.6px;background:#fefefe;box-shadow:1.3px 1.3px 0 #a19e94,-.6px -.6px 0 #f4f2ec"></div><span class="t" style="left:146.8px;top:504.7px;font-size:9.8px;color:#1a1a1a;">я</span><div class="a" style="left:169.2px;top:504px;width:23.3px;height:14.6px;background:#fefefe;box-shadow:1.3px 1.3px 0 #a19e94,-.6px -.6px 0 #f4f2ec"></div><span class="t" style="left:172.4px;top:504.7px;font-size:9.8px;color:#1a1a1a;">ч</span><div class="a" style="left:194.9px;top:504px;width:23.3px;height:14.6px;background:#fefefe;box-shadow:1.3px 1.3px 0 #a19e94,-.6px -.6px 0 #f4f2ec"></div><span class="t" style="left:198.1px;top:504.7px;font-size:9.8px;color:#1a1a1a;">с</span><div class="a" style="left:220.5px;top:504px;width:23.3px;height:14.6px;background:#fefefe;box-shadow:1.3px 1.3px 0 #a19e94,-.6px -.6px 0 #f4f2ec"></div><span class="t" style="left:223.7px;top:504.7px;font-size:9.8px;color:#1a1a1a;">м</span><div class="a" style="left:246.1px;top:504px;width:23.3px;height:14.6px;background:#fefefe;box-shadow:1.3px 1.3px 0 #a19e94,-.6px -.6px 0 #f4f2ec"></div><span class="t" style="left:249.3px;top:504.7px;font-size:9.8px;color:#1a1a1a;">и</span><div class="a" style="left:271.8px;top:504px;width:23.3px;height:14.6px;background:#fefefe;box-shadow:1.3px 1.3px 0 #a19e94,-.6px -.6px 0 #f4f2ec"></div><span class="t" style="left:274.9px;top:504.7px;font-size:9.8px;color:#1a1a1a;">т</span><div class="a" style="left:297.4px;top:504px;width:23.3px;height:14.6px;background:#fefefe;box-shadow:1.3px 1.3px 0 #a19e94,-.6px -.6px 0 #f4f2ec"></div><span class="t" style="left:300.6px;top:504.7px;font-size:9.8px;color:#1a1a1a;">ь</span><div class="a" style="left:323px;top:504px;width:23.3px;height:14.6px;background:#fefefe;box-shadow:1.3px 1.3px 0 #a19e94,-.6px -.6px 0 #f4f2ec"></div><span class="t" style="left:326.2px;top:504.7px;font-size:9.8px;color:#1a1a1a;">б</span><div class="a" style="left:348.6px;top:504px;width:23.3px;height:14.6px;background:#fefefe;box-shadow:1.3px 1.3px 0 #a19e94,-.6px -.6px 0 #f4f2ec"></div><span class="t" style="left:351.8px;top:504.7px;font-size:9.8px;color:#1a1a1a;">ю</span><div class="a" style="left:374.3px;top:504px;width:23.3px;height:14.6px;background:#fefefe;box-shadow:1.3px 1.3px 0 #a19e94,-.6px -.6px 0 #f4f2ec"></div><span class="t" style="left:376.9px;top:504.7px;font-size:6.6px;color:#8c8c8c;">,</span><span class="t" style="left:387.3px;top:508.5px;font-size:9.6px;color:#1a1a1a;">.</span><div class="a" style="left:399.9px;top:504px;width:23.3px;height:14.6px;background:#fefefe;box-shadow:1.3px 1.3px 0 #a19e94,-.6px -.6px 0 #f4f2ec"></div><svg style="left:404.4px;top:507.5px" width="5" height="8" viewBox="0 0 5 8"><path d="M2.5 8V.8M.5 2.8L2.5.6 4.5 2.8" stroke="#222" stroke-width=".8" fill="none"/></svg><div class="a" style="left:425.6px;top:504px;width:52px;height:14.6px;background:#fefefe;box-shadow:1.3px 1.3px 0 #a19e94,-.6px -.6px 0 #f4f2ec"></div><span class="t" style="left:428.8px;top:504.7px;font-size:9.8px;color:#1a1a1a;transform:scaleX(0.943);">Shift</span><div class="a" style="left:483px;top:504px;width:40.5px;height:14.6px;background:#7b7b7b;box-shadow:1.3px 1.3px 0 #5a5a5a,-.6px -.6px 0 #f4f2ec"></div><span class="t" style="left:486.2px;top:504.7px;font-size:9.8px;color:#c4c4c4;transform:scaleX(0.901);">PrtScn</span><div class="a" style="left:525.8px;top:504px;width:41.6px;height:14.6px;background:#fefefe;box-shadow:1.3px 1.3px 0 #a19e94,-.6px -.6px 0 #f4f2ec"></div><span class="t" style="left:529.0px;top:504.7px;font-size:9.8px;color:#1a1a1a;transform:scaleX(0.872);">ScLk</span><div class="a" style="left:67.8px;top:521.2px;width:35.2px;height:14.6px;background:#fefefe;box-shadow:1.3px 1.3px 0 #a19e94,-.6px -.6px 0 #f4f2ec"></div><span class="t" style="left:71.0px;top:521.9px;font-size:9.8px;color:#1a1a1a;transform:scaleX(0.951);">Ctrl</span><div class="a" style="left:105.6px;top:521.2px;width:23.3px;height:14.6px;background:#fefefe;box-shadow:1.3px 1.3px 0 #a19e94,-.6px -.6px 0 #f4f2ec"></div><svg style="left:110.5px;top:524.5px" width="9" height="8.5" viewBox="0 0 9 8.5"><path d="M1.3.8c1-.5 2-.5 3 0L3.7 3.6c-1-.5-2-.5-3 0zM5 1c1 .5 2 .5 3 0L7.4 3.8c-1 .5-2 .5-3 0zM.5 4.5c1-.5 2-.5 3 0L2.9 7.3c-1-.5-2-.5-3 0zM4.2 4.7c1 .5 2 .5 3 0L6.6 7.5c-1 .5-2 .5-3 0z" fill="#111"/></svg><div class="a" style="left:131.2px;top:521.2px;width:23.3px;height:14.6px;background:#fefefe;box-shadow:1.3px 1.3px 0 #a19e94,-.6px -.6px 0 #f4f2ec"></div><span class="t" style="left:134.4px;top:521.9px;font-size:9.8px;color:#1a1a1a;transform:scaleX(0.918);">Alt</span><div class="a" style="left:156.9px;top:521.2px;width:126.8px;height:14.6px;background:#fefefe;box-shadow:1.3px 1.3px 0 #a19e94,-.6px -.6px 0 #f4f2ec"></div><div class="a" style="left:285.9px;top:521.2px;width:21.9px;height:14.6px;background:#fefefe;box-shadow:1.3px 1.3px 0 #a19e94,-.6px -.6px 0 #f4f2ec"></div><span class="t" style="left:289.1px;top:521.9px;font-size:9.8px;color:#1a1a1a;transform:scaleX(0.918);">Alt</span><div class="a" style="left:310.3px;top:521.2px;width:23px;height:14.6px;background:#fefefe;box-shadow:1.3px 1.3px 0 #a19e94,-.6px -.6px 0 #f4f2ec"></div><svg style="left:316px;top:524.5px" width="6" height="7.5" viewBox="0 0 6 7.5"><rect x=".5" y=".5" width="5" height="6.5" fill="none" stroke="#222" stroke-width=".9"/><path d="M.5 2h5" stroke="#222" stroke-width="1.2"/><rect x="1.8" y="3.6" width="2.4" height="1.8" fill="#222"/></svg><div class="a" style="left:336.3px;top:521.2px;width:35.7px;height:14.6px;background:#fefefe;box-shadow:1.3px 1.3px 0 #a19e94,-.6px -.6px 0 #f4f2ec"></div><span class="t" style="left:339.5px;top:521.9px;font-size:9.8px;color:#1a1a1a;transform:scaleX(0.951);">Ctrl</span><div class="a" style="left:374.3px;top:521.2px;width:23.3px;height:14.6px;background:#fefefe;box-shadow:1.3px 1.3px 0 #a19e94,-.6px -.6px 0 #f4f2ec"></div><svg style="left:377.8px;top:526px" width="8" height="5" viewBox="0 0 8 5"><path d="M8 2.5H.8M2.8.5L.6 2.5 2.8 4.5" stroke="#222" stroke-width=".8" fill="none"/></svg><div class="a" style="left:399.9px;top:521.2px;width:23.3px;height:14.6px;background:#fefefe;box-shadow:1.3px 1.3px 0 #a19e94,-.6px -.6px 0 #f4f2ec"></div><svg style="left:404.4px;top:524.5px" width="5" height="8" viewBox="0 0 5 8"><path d="M2.5 0v7.2M.5 5.2L2.5 7.4 4.5 5.2" stroke="#222" stroke-width=".8" fill="none"/></svg><div class="a" style="left:425.6px;top:521.2px;width:23.3px;height:14.6px;background:#fefefe;box-shadow:1.3px 1.3px 0 #a19e94,-.6px -.6px 0 #f4f2ec"></div><svg style="left:429.1px;top:526px" width="8" height="5" viewBox="0 0 8 5"><path d="M0 2.5h7.2M5.2.5L7.4 2.5 5.2 4.5" stroke="#222" stroke-width=".8" fill="none"/></svg><div class="a" style="left:451.5px;top:521.2px;width:26.1px;height:14.6px;background:#fefefe;box-shadow:1.3px 1.3px 0 #a19e94,-.6px -.6px 0 #f4f2ec"></div><span class="t" style="left:454.7px;top:521.9px;font-size:9.8px;color:#1a1a1a;transform:scaleX(0.787);">Fn</span><div class="a" style="left:483px;top:521.2px;width:40.5px;height:14.6px;background:#fefefe;box-shadow:1.3px 1.3px 0 #a19e94,-.6px -.6px 0 #f4f2ec"></div><span class="t" style="left:486.2px;top:523.6px;font-size:6.8px;color:#1a1a1a;transform:scaleX(0.925);">Параметры</span><div class="a" style="left:525.8px;top:521.2px;width:41.6px;height:14.6px;background:#fefefe;box-shadow:1.3px 1.3px 0 #a19e94,-.6px -.6px 0 #f4f2ec"></div><span class="t" style="left:529.0px;top:521.9px;font-size:9.8px;color:#1a1a1a;transform:scaleX(0.872);">Справка</span>


<div class="a" style="left:818.8px;top:12px;width:205.2px;height:535.3px;background:#fff"></div>
<svg style="left:831.5px;top:25px" width="5" height="3.5" viewBox="0 0 6 4"><path d="M.6.6L3 3 5.4.6" stroke="#555" stroke-width="1.3" fill="none"/></svg>
<span class="t" style="left:891.4px;top:21.6px;font-size:9px;color:#2a2a2a;font-weight:bold;transform:scaleX(0.926);">Участники (15)</span>
<div class="a" style="left:831.5px;top:47px;width:182px;height:20px;border-radius:5px;border:1px solid #c9ccd6;background:#fff"></div>
<svg style="left:838.3px;top:52.8px" width="8.4" height="8.4" viewBox="0 0 7 7"><circle cx="2.9" cy="2.9" r="2.3" fill="none" stroke="#777" stroke-width=".8"/><path d="M4.6 4.6L6.6 6.6" stroke="#777" stroke-width=".9"/></svg>
<span class="t" style="left:848.5px;top:52.2px;font-size:8.7px;color:#6e6e6e;transform:scaleX(0.923);">Найти участника</span>
<div class="a" style="left:833.5px;top:73.10000000000001px;width:16.6px;height:16.6px;border-radius:4px;overflow:hidden;background:#efe9e3"><div class="a" style="left:0;top:0;width:17px;height:17px;filter:blur(.5px)"><div class="a" style="left:3.5px;top:.5px;width:10.5px;height:8.5px;border-radius:50% 50% 40% 40%;background:#a87c58"></div><div class="a" style="left:5.2px;top:2px;width:7px;height:7.5px;border-radius:45% 45% 50% 50%;background:#e2b8a0"></div><div class="a" style="left:7px;top:9px;width:3.5px;height:3px;background:#d8b4a0"></div><div class="a" style="left:1.5px;top:11px;width:14px;height:7px;border-radius:50% 50% 0 0;background:#f4f0ec"></div></div></div><span class="t" style="left:858.8px;top:77.1px;font-size:9px;color:#3a3a3a;transform:scaleX(0.863);">Оксана Сакал...</span><span class="t" style="left:921.7px;top:77.1px;font-size:9px;color:#3a3a3a;transform:scaleX(0.920);">(Организатор, я)</span><svg style="left:988.2px;top:75.9px" width="10" height="11" viewBox="0 0 10 11"><rect x="3.4" y=".8" width="3.2" height="5.6" rx="1.6" fill="none" stroke="#e0605c" stroke-width=".8"/><path d="M1.8 5a3.2 3.2 0 0 0 6.4 0M5 8.2v1.8M3.4 10.2h3.2" stroke="#e0605c" stroke-width=".8" fill="none"/><path d="M8.8.6L1.2 10.4" stroke="#e0605c" stroke-width=".9"/></svg><svg style="left:1002.6px;top:76.4px" width="12" height="10" viewBox="0 0 12 10"><rect x=".6" y="2" width="7.6" height="6" rx="1.4" fill="none" stroke="#8c8c8c" stroke-width=".8"/><path d="M8.2 4.2l2.8-1.5v4.6L8.2 5.8" fill="none" stroke="#8c8c8c" stroke-width=".8"/></svg><div class="a" style="left:833.5px;top:99.37px;width:16.6px;height:16.6px;border-radius:4px;background:#2d7dbd"></div><span class="t" style="left:838.9px;top:103.4px;font-size:8.6px;color:#fff;font-weight:bold;">S</span><span class="t" style="left:858.8px;top:103.4px;font-size:9px;color:#3a3a3a;transform:scaleX(0.853);">Sofia</span><div class="a" style="left:972.6px;top:103.87px;width:10.8px;height:7.6px;border-radius:1.2px;background:#1fa34c"></div><svg style="left:976px;top:105.37px" width="4" height="4.6" viewBox="0 0 4 4.6"><path d="M2 .2L4 2.4H2.7v2.2H1.3V2.4H0z" fill="#fff"/></svg><svg style="left:988.2px;top:102.17px" width="10" height="11" viewBox="0 0 10 11"><rect x="3.4" y=".8" width="3.2" height="5.6" rx="1.6" fill="#c8c8c8" stroke="#8c8c8c" stroke-width=".8"/><path d="M1.8 5a3.2 3.2 0 0 0 6.4 0M5 8.2v1.8M3.4 10.2h3.2" stroke="#8c8c8c" stroke-width=".8" fill="none"/></svg><svg style="left:1002.6px;top:102.67px" width="12" height="10" viewBox="0 0 12 10"><rect x=".6" y="2" width="7.6" height="6" rx="1.4" fill="none" stroke="#8c8c8c" stroke-width=".8"/><path d="M8.2 4.2l2.8-1.5v4.6L8.2 5.8" fill="none" stroke="#8c8c8c" stroke-width=".8"/></svg><div class="a" style="left:833.5px;top:125.64px;width:16.6px;height:16.6px;border-radius:4px;background:#d35a12"></div><span class="t" style="left:838.7px;top:129.7px;font-size:8.6px;color:#fff;font-weight:bold;">A</span><span class="t" style="left:858.8px;top:129.7px;font-size:9px;color:#3a3a3a;transform:scaleX(0.832);">Anna</span><svg style="left:988.2px;top:128.44px" width="10" height="11" viewBox="0 0 10 11"><rect x="3.4" y=".8" width="3.2" height="5.6" rx="1.6" fill="none" stroke="#e0605c" stroke-width=".8"/><path d="M1.8 5a3.2 3.2 0 0 0 6.4 0M5 8.2v1.8M3.4 10.2h3.2" stroke="#e0605c" stroke-width=".8" fill="none"/><path d="M8.8.6L1.2 10.4" stroke="#e0605c" stroke-width=".9"/></svg><svg style="left:1002.6px;top:128.94px" width="12" height="10" viewBox="0 0 12 10"><rect x=".6" y="2" width="7.6" height="6" rx="1.4" fill="none" stroke="#e0605c" stroke-width=".8"/><path d="M8.2 4.2l2.8-1.5v4.6L8.2 5.8" fill="none" stroke="#e0605c" stroke-width=".8"/><path d="M10.5.5L1 9.5" stroke="#e0605c" stroke-width=".9"/></svg><div class="a" style="left:833.5px;top:151.91px;width:16.6px;height:16.6px;border-radius:4px;overflow:hidden;background:linear-gradient(135deg,#d8f0f4,#eafafa 50%,#c8e8ec)"><div class="a" style="left:3px;top:2px;width:11px;height:11px;border-radius:50%;background:#58b8c0"></div><div class="a" style="left:5.5px;top:5px;width:6px;height:6px;border-radius:50%;background:#f4e4dc"></div><div class="a" style="left:1px;top:6px;width:4px;height:10px;background:#3a98a4;border-radius:2px"></div><div class="a" style="left:12px;top:6px;width:4px;height:10px;background:#3a98a4;border-radius:2px"></div></div><span class="t" style="left:858.8px;top:155.9px;font-size:9px;color:#3a3a3a;transform:scaleX(0.897);">Александра Вереина</span><svg style="left:988.2px;top:154.71px" width="10" height="11" viewBox="0 0 10 11"><rect x="3.4" y=".8" width="3.2" height="5.6" rx="1.6" fill="none" stroke="#e0605c" stroke-width=".8"/><path d="M1.8 5a3.2 3.2 0 0 0 6.4 0M5 8.2v1.8M3.4 10.2h3.2" stroke="#e0605c" stroke-width=".8" fill="none"/><path d="M8.8.6L1.2 10.4" stroke="#e0605c" stroke-width=".9"/></svg><svg style="left:1002.6px;top:155.21px" width="12" height="10" viewBox="0 0 12 10"><rect x=".6" y="2" width="7.6" height="6" rx="1.4" fill="none" stroke="#e0605c" stroke-width=".8"/><path d="M8.2 4.2l2.8-1.5v4.6L8.2 5.8" fill="none" stroke="#e0605c" stroke-width=".8"/><path d="M10.5.5L1 9.5" stroke="#e0605c" stroke-width=".9"/></svg><div class="a" style="left:833.5px;top:178.18px;width:16.6px;height:16.6px;border-radius:4px;background:#f39c1f"></div><span class="t" style="left:838.7px;top:182.2px;font-size:8.6px;color:#fff;font-weight:bold;">А</span><span class="t" style="left:858.8px;top:182.2px;font-size:9px;color:#3a3a3a;transform:scaleX(0.914);">Альбина</span><svg style="left:1003.6px;top:180.98000000000002px" width="10" height="11" viewBox="0 0 10 11"><rect x="3.4" y=".8" width="3.2" height="5.6" rx="1.6" fill="none" stroke="#e0605c" stroke-width=".8"/><path d="M1.8 5a3.2 3.2 0 0 0 6.4 0M5 8.2v1.8M3.4 10.2h3.2" stroke="#e0605c" stroke-width=".8" fill="none"/><path d="M8.8.6L1.2 10.4" stroke="#e0605c" stroke-width=".9"/></svg><div class="a" style="left:833.5px;top:204.45px;width:16.6px;height:16.6px;border-radius:4px;background:#2e4868"></div><span class="t" style="left:838.7px;top:208.5px;font-size:8.6px;color:#fff;font-weight:bold;">А</span><span class="t" style="left:858.8px;top:208.5px;font-size:9px;color:#3a3a3a;transform:scaleX(0.926);">Альона Сторожук</span><svg style="left:988.2px;top:207.25px" width="10" height="11" viewBox="0 0 10 11"><rect x="3.4" y=".8" width="3.2" height="5.6" rx="1.6" fill="none" stroke="#e0605c" stroke-width=".8"/><path d="M1.8 5a3.2 3.2 0 0 0 6.4 0M5 8.2v1.8M3.4 10.2h3.2" stroke="#e0605c" stroke-width=".8" fill="none"/><path d="M8.8.6L1.2 10.4" stroke="#e0605c" stroke-width=".9"/></svg><svg style="left:1002.6px;top:207.75px" width="12" height="10" viewBox="0 0 12 10"><rect x=".6" y="2" width="7.6" height="6" rx="1.4" fill="none" stroke="#e0605c" stroke-width=".8"/><path d="M8.2 4.2l2.8-1.5v4.6L8.2 5.8" fill="none" stroke="#e0605c" stroke-width=".8"/><path d="M10.5.5L1 9.5" stroke="#e0605c" stroke-width=".9"/></svg><div class="a" style="left:833.5px;top:230.72px;width:16.6px;height:16.6px;border-radius:4px;background:#d35a12"></div><span class="t" style="left:838.7px;top:234.8px;font-size:8.6px;color:#fff;font-weight:bold;">В</span><span class="t" style="left:858.8px;top:234.7px;font-size:9px;color:#3a3a3a;transform:scaleX(0.860);">Валентина</span><svg style="left:988.2px;top:233.52px" width="10" height="11" viewBox="0 0 10 11"><rect x="3.4" y=".8" width="3.2" height="5.6" rx="1.6" fill="none" stroke="#e0605c" stroke-width=".8"/><path d="M1.8 5a3.2 3.2 0 0 0 6.4 0M5 8.2v1.8M3.4 10.2h3.2" stroke="#e0605c" stroke-width=".8" fill="none"/><path d="M8.8.6L1.2 10.4" stroke="#e0605c" stroke-width=".9"/></svg><svg style="left:1002.6px;top:234.02px" width="12" height="10" viewBox="0 0 12 10"><rect x=".6" y="2" width="7.6" height="6" rx="1.4" fill="none" stroke="#e0605c" stroke-width=".8"/><path d="M8.2 4.2l2.8-1.5v4.6L8.2 5.8" fill="none" stroke="#e0605c" stroke-width=".8"/><path d="M10.5.5L1 9.5" stroke="#e0605c" stroke-width=".9"/></svg><div class="a" style="left:833.5px;top:256.98999999999995px;width:16.6px;height:16.6px;border-radius:4px;background:#2d7dbd"></div><span class="t" style="left:838.7px;top:261.0px;font-size:8.6px;color:#fff;font-weight:bold;">Д</span><span class="t" style="left:858.8px;top:261.0px;font-size:9px;color:#3a3a3a;transform:scaleX(0.926);">Дженнифер Макаренко</span><svg style="left:988.2px;top:259.78999999999996px" width="10" height="11" viewBox="0 0 10 11"><rect x="3.4" y=".8" width="3.2" height="5.6" rx="1.6" fill="none" stroke="#e0605c" stroke-width=".8"/><path d="M1.8 5a3.2 3.2 0 0 0 6.4 0M5 8.2v1.8M3.4 10.2h3.2" stroke="#e0605c" stroke-width=".8" fill="none"/><path d="M8.8.6L1.2 10.4" stroke="#e0605c" stroke-width=".9"/></svg><svg style="left:1002.6px;top:260.28999999999996px" width="12" height="10" viewBox="0 0 12 10"><rect x=".6" y="2" width="7.6" height="6" rx="1.4" fill="none" stroke="#e0605c" stroke-width=".8"/><path d="M8.2 4.2l2.8-1.5v4.6L8.2 5.8" fill="none" stroke="#e0605c" stroke-width=".8"/><path d="M10.5.5L1 9.5" stroke="#e0605c" stroke-width=".9"/></svg><div class="a" style="left:833.5px;top:283.26px;width:16.6px;height:16.6px;border-radius:4px;background:#2d7dbd"></div><span class="t" style="left:839.2px;top:287.3px;font-size:8.6px;color:#fff;font-weight:bold;">К</span><span class="t" style="left:858.8px;top:287.3px;font-size:9px;color:#3a3a3a;transform:scaleX(0.911);">Каріна Никитинчук 4 курс денн...</span><svg style="left:988.2px;top:286.06px" width="10" height="11" viewBox="0 0 10 11"><rect x="3.4" y=".8" width="3.2" height="5.6" rx="1.6" fill="none" stroke="#e0605c" stroke-width=".8"/><path d="M1.8 5a3.2 3.2 0 0 0 6.4 0M5 8.2v1.8M3.4 10.2h3.2" stroke="#e0605c" stroke-width=".8" fill="none"/><path d="M8.8.6L1.2 10.4" stroke="#e0605c" stroke-width=".9"/></svg><svg style="left:1002.6px;top:286.56px" width="12" height="10" viewBox="0 0 12 10"><rect x=".6" y="2" width="7.6" height="6" rx="1.4" fill="none" stroke="#e0605c" stroke-width=".8"/><path d="M8.2 4.2l2.8-1.5v4.6L8.2 5.8" fill="none" stroke="#e0605c" stroke-width=".8"/><path d="M10.5.5L1 9.5" stroke="#e0605c" stroke-width=".9"/></svg><div class="a" style="left:833.5px;top:309.53000000000003px;width:16.6px;height:16.6px;border-radius:4px;background:#27ae60"></div><span class="t" style="left:839.2px;top:313.6px;font-size:8.6px;color:#fff;font-weight:bold;">К</span><span class="t" style="left:858.8px;top:313.6px;font-size:9px;color:#3a3a3a;transform:scaleX(0.921);">Катя Малявина</span><svg style="left:988.2px;top:312.33000000000004px" width="10" height="11" viewBox="0 0 10 11"><rect x="3.4" y=".8" width="3.2" height="5.6" rx="1.6" fill="none" stroke="#e0605c" stroke-width=".8"/><path d="M1.8 5a3.2 3.2 0 0 0 6.4 0M5 8.2v1.8M3.4 10.2h3.2" stroke="#e0605c" stroke-width=".8" fill="none"/><path d="M8.8.6L1.2 10.4" stroke="#e0605c" stroke-width=".9"/></svg><svg style="left:1002.6px;top:312.83000000000004px" width="12" height="10" viewBox="0 0 12 10"><rect x=".6" y="2" width="7.6" height="6" rx="1.4" fill="none" stroke="#e0605c" stroke-width=".8"/><path d="M8.2 4.2l2.8-1.5v4.6L8.2 5.8" fill="none" stroke="#e0605c" stroke-width=".8"/><path d="M10.5.5L1 9.5" stroke="#e0605c" stroke-width=".9"/></svg><div class="a" style="left:833.5px;top:335.8px;width:16.6px;height:16.6px;border-radius:4px;overflow:hidden;background:linear-gradient(135deg,#2a1838 0,#5a2868 45%,#c050a0 70%,#f0a0c0 100%)"><div class="a" style="left:5px;top:4px;width:7px;height:9px;border-radius:50%;background:#e8b8c8;opacity:.7"></div></div><span class="t" style="left:858.8px;top:339.8px;font-size:9px;color:#3a3a3a;transform:scaleX(0.928);">Кулік Ольга</span><svg style="left:988.2px;top:338.6px" width="10" height="11" viewBox="0 0 10 11"><rect x="3.4" y=".8" width="3.2" height="5.6" rx="1.6" fill="none" stroke="#e0605c" stroke-width=".8"/><path d="M1.8 5a3.2 3.2 0 0 0 6.4 0M5 8.2v1.8M3.4 10.2h3.2" stroke="#e0605c" stroke-width=".8" fill="none"/><path d="M8.8.6L1.2 10.4" stroke="#e0605c" stroke-width=".9"/></svg><svg style="left:1002.6px;top:339.1px" width="12" height="10" viewBox="0 0 12 10"><rect x=".6" y="2" width="7.6" height="6" rx="1.4" fill="none" stroke="#e0605c" stroke-width=".8"/><path d="M8.2 4.2l2.8-1.5v4.6L8.2 5.8" fill="none" stroke="#e0605c" stroke-width=".8"/><path d="M10.5.5L1 9.5" stroke="#e0605c" stroke-width=".9"/></svg><div class="a" style="left:833.5px;top:362.07px;width:16.6px;height:16.6px;border-radius:4px;background:#27967a"></div><span class="t" style="left:838.7px;top:366.1px;font-size:8.6px;color:#fff;font-weight:bold;">Н</span><span class="t" style="left:858.8px;top:366.1px;font-size:9px;color:#3a3a3a;transform:scaleX(0.899);">Нагинская Анна</span><svg style="left:988.2px;top:364.87px" width="10" height="11" viewBox="0 0 10 11"><rect x="3.4" y=".8" width="3.2" height="5.6" rx="1.6" fill="none" stroke="#e0605c" stroke-width=".8"/><path d="M1.8 5a3.2 3.2 0 0 0 6.4 0M5 8.2v1.8M3.4 10.2h3.2" stroke="#e0605c" stroke-width=".8" fill="none"/><path d="M8.8.6L1.2 10.4" stroke="#e0605c" stroke-width=".9"/></svg><svg style="left:1002.6px;top:365.37px" width="12" height="10" viewBox="0 0 12 10"><rect x=".6" y="2" width="7.6" height="6" rx="1.4" fill="none" stroke="#e0605c" stroke-width=".8"/><path d="M8.2 4.2l2.8-1.5v4.6L8.2 5.8" fill="none" stroke="#e0605c" stroke-width=".8"/><path d="M10.5.5L1 9.5" stroke="#e0605c" stroke-width=".9"/></svg><div class="a" style="left:833.5px;top:388.34px;width:16.6px;height:16.6px;border-radius:4px;overflow:hidden;background:linear-gradient(180deg,#e8dcd8,#d8c8c8)"><div class="a" style="left:3px;top:1px;width:11px;height:12px;border-radius:50% 50% 30% 30%;background:#d8c4a8"></div><div class="a" style="left:5.5px;top:4px;width:6px;height:7px;border-radius:50%;background:#f0d4c4"></div><div class="a" style="left:1px;top:12px;width:15px;height:6px;background:#b8a8b8"></div></div><span class="t" style="left:858.8px;top:392.4px;font-size:9px;color:#3a3a3a;transform:scaleX(0.928);">Татьяна Кирьязова</span><svg style="left:988.2px;top:391.14px" width="10" height="11" viewBox="0 0 10 11"><rect x="3.4" y=".8" width="3.2" height="5.6" rx="1.6" fill="none" stroke="#e0605c" stroke-width=".8"/><path d="M1.8 5a3.2 3.2 0 0 0 6.4 0M5 8.2v1.8M3.4 10.2h3.2" stroke="#e0605c" stroke-width=".8" fill="none"/><path d="M8.8.6L1.2 10.4" stroke="#e0605c" stroke-width=".9"/></svg><svg style="left:1002.6px;top:391.64px" width="12" height="10" viewBox="0 0 12 10"><rect x=".6" y="2" width="7.6" height="6" rx="1.4" fill="none" stroke="#e0605c" stroke-width=".8"/><path d="M8.2 4.2l2.8-1.5v4.6L8.2 5.8" fill="none" stroke="#e0605c" stroke-width=".8"/><path d="M10.5.5L1 9.5" stroke="#e0605c" stroke-width=".9"/></svg><div class="a" style="left:833.5px;top:414.60999999999996px;width:16.6px;height:16.6px;border-radius:4px;background:#c0392b"></div><span class="t" style="left:837.5px;top:418.7px;font-size:8.6px;color:#fff;font-weight:bold;">Ш</span><span class="t" style="left:858.8px;top:418.6px;font-size:9px;color:#3a3a3a;transform:scaleX(0.945);">Шаргородс...</span><div class="a" style="left:914px;top:416.10999999999996px;width:87px;height:13.6px;border-radius:3.5px;background:#1a6fe8"></div><span class="t" style="left:921.5px;top:418.2px;font-size:8.4px;color:#fff;font-weight:bold;transform:scaleX(0.999);">Дополнительно</span><svg style="left:990.5px;top:420.10999999999996px" width="3.5" height="5.6" viewBox="0 0 3.5 5.6"><path d="M.5.5l2.3 2.3L.5 5.1" stroke="#fff" stroke-width="1" fill="none"/></svg><svg style="left:1003.6px;top:417.40999999999997px" width="10" height="11" viewBox="0 0 10 11"><rect x="3.4" y=".8" width="3.2" height="5.6" rx="1.6" fill="none" stroke="#e0605c" stroke-width=".8"/><path d="M1.8 5a3.2 3.2 0 0 0 6.4 0M5 8.2v1.8M3.4 10.2h3.2" stroke="#e0605c" stroke-width=".8" fill="none"/><path d="M8.8.6L1.2 10.4" stroke="#e0605c" stroke-width=".9"/></svg><div class="a" style="left:833.5px;top:440.87999999999994px;width:16.6px;height:16.6px;border-radius:4px;overflow:hidden;background:linear-gradient(135deg,#1c1830,#382858 50%,#1a1428)"><div class="a" style="left:5px;top:5px;width:7px;height:8px;border-radius:40%;background:#c03848"></div><div class="a" style="left:3px;top:2px;width:5px;height:5px;border-radius:50%;background:#6858a8;opacity:.6"></div></div><span class="t" style="left:858.8px;top:444.9px;font-size:9px;color:#3a3a3a;transform:scaleX(0.942);">Маргарита Пирязева</span><svg style="left:1002.6px;top:444.17999999999995px" width="12" height="10" viewBox="0 0 12 10"><rect x=".6" y="2" width="7.6" height="6" rx="1.4" fill="none" stroke="#e0605c" stroke-width=".8"/><path d="M8.2 4.2l2.8-1.5v4.6L8.2 5.8" fill="none" stroke="#e0605c" stroke-width=".8"/><path d="M10.5.5L1 9.5" stroke="#e0605c" stroke-width=".9"/></svg>
<div class="a" style="left:838px;top:524px;width:51px;height:14.5px;border-radius:4px;background:#f1f1f4"></div><span class="t" style="left:842.8px;top:526.5px;font-size:8.5px;color:#333;transform:scaleX(0.912);">Пригласить</span>
<div class="a" style="left:908px;top:524px;width:63.5px;height:14.5px;border-radius:4px;background:#f1f1f4"></div><span class="t" style="left:912.5px;top:526.5px;font-size:8.5px;color:#333;transform:scaleX(0.884);">Выкл. весь звук</span>
<div class="a" style="left:991px;top:524px;width:15px;height:14.5px;border-radius:4px;background:#f1f1f4"></div><span class="t" style="left:995.8px;top:526.5px;font-size:8.5px;color:#333;transform:scaleX(0.775);">...</span>


<div class="a" style="left:0;top:547.3px;width:1024px;height:28.7px;background:#d4d0c8;border-top:1px solid #f4f2ee"></div>
<div class="a" style="left:1.7px;top:550px;width:32.5px;height:24px;background:#d4d0c8;border:1px solid;border-color:#fff #404040 #404040 #fff;box-shadow:inset -1px -1px 0 #808080"></div>
<svg style="left:4.5px;top:557px" width="9" height="9" viewBox="0 0 9 9"><path d="M1.3.8c1-.5 2-.5 3 0L3.7 3.8c-1-.5-2-.5-3 0z" fill="#e8502a"/><path d="M5 1c1 .5 2 .5 3 0L7.4 4c-1 .5-2 .5-3 0z" fill="#6ab42c"/><path d="M.5 4.7c1-.5 2-.5 3 0L2.9 7.7c-1-.5-2-.5-3 0z" fill="#2a7ad8"/><path d="M4.2 4.9c1 .5 2 .5 3 0L6.6 7.9c-1 .5-2 .5-3 0z" fill="#f4c020"/></svg>
<span class="t" style="left:14.0px;top:557.3px;font-size:8.2px;color:#000;font-weight:bold;transform:scaleX(0.926);">Пуск</span>
<!-- alice -->
<div class="a" style="left:48.5px;top:553px;width:19px;height:19px;border-radius:50%;background:radial-gradient(circle at 40% 35%,#c07cf4,#8a4ce8 80%)"></div>
<svg style="left:53.5px;top:558.5px" width="9" height="8" viewBox="0 0 9 8"><path d="M4.5.8c.5 0 .9.3 1.2.8l2.6 4.4c.6 1-.1 1.7-1.1 1.5-1.8-.4-3.6-.4-5.4 0-1 .2-1.7-.5-1.1-1.5L3.3 1.6c.3-.5.7-.8 1.2-.8z" fill="#fff"/></svg>
<div class="a" style="left:81.5px;top:550px;width:30px;height:24px;background:#f4f2ee;border:1px solid;border-color:#404040 #fff #fff #404040;box-shadow:inset 1px 1px 0 #808080"></div>
<div class="a" style="left:87.5px;top:553.5px;width:18px;height:18px;border-radius:5px;background:#4a8cf0"></div>
<svg style="left:90.5px;top:559px" width="12" height="7" viewBox="0 0 12 7"><rect width="8" height="7" rx="1.8" fill="#fff"/><path d="M8.5 2.5L12 .5v6L8.5 4.5z" fill="#fff"/></svg>
<!-- media player -->
<div class="a" style="left:120.5px;top:555px;width:13px;height:15px;background:#6ea8dc;transform:skewY(-6deg)"></div>
<div class="a" style="left:124px;top:557px;width:12px;height:13px;background:#f4f4f4;border:.6px solid #9ab"></div>
<div class="a" style="left:123px;top:558.5px;width:10px;height:10px;border-radius:50%;background:#f08a24"></div>
<svg style="left:126.5px;top:561px" width="4.5" height="5" viewBox="0 0 4.5 5"><path d="M0 0l4.5 2.5L0 5z" fill="#fff"/></svg>
<!-- opera -->
<div class="a" style="left:153px;top:553.5px;width:17.5px;height:18.5px;border-radius:50%;background:#e0202c"></div>
<div class="a" style="left:157.8px;top:556px;width:8px;height:13.5px;border-radius:50%;background:#f4f0ec"></div>
<!-- ppt -->
<div class="a" style="left:189px;top:552.5px;width:14px;height:16px;background:#f8e8dc;border:.8px solid #e8a888"></div>
<div class="a" style="left:184.5px;top:556px;width:17px;height:13px;background:#e8683c;border:.8px solid #c84820;border-radius:1px"></div>
<div class="a" style="left:187px;top:558.5px;width:12px;height:8px;background:#fbe4d8"></div>
<div class="a" style="left:189.5px;top:559.5px;width:5.5px;height:5.5px;border-radius:50%;background:#e8683c"></div>
<!-- IE -->
<div class="a" style="left:218px;top:554.5px;width:16.5px;height:16.5px;border-radius:50%;background:radial-gradient(circle at 40% 35%,#7cc8f8,#1c78d0 75%)"></div>
<div class="a" style="left:222px;top:558.5px;width:8.5px;height:8.5px;border-radius:50%;background:#d4d0c8"></div>
<div class="a" style="left:219.5px;top:561.5px;width:13.5px;height:2.6px;background:#2a88dc"></div>
<div class="a" style="left:215px;top:557.5px;width:23px;height:9px;border-radius:50%;border:1.5px solid #f0b820;border-bottom-color:transparent;border-left-color:transparent;transform:rotate(-28deg)"></div>
<!-- VS -->
<svg style="left:246px;top:553.5px" width="20" height="18" viewBox="0 0 20 18"><path d="M0 2.5l7 6.5-7 6.5z" fill="#7a48c0"/><path d="M20 .5L7.5 9 20 17.5z" fill="#9868d8"/><path d="M20 .5l-4 3v11l4 3z" fill="#5a30a0"/><path d="M1.5 5l4.5 4-4.5 4z" fill="#c8a8f0"/></svg>
<div class="a" style="left:274px;top:550px;width:30px;height:24px;background:#d4d0c8;border:1px solid;border-color:#fff #404040 #404040 #fff;box-shadow:inset -1px -1px 0 #808080"></div>
<div class="a" style="left:279.5px;top:553.5px;width:18.5px;height:18.5px;border-radius:50%;background:conic-gradient(from -60deg,#e8402c 0 120deg,#f8c41c 120deg 240deg,#2ca04c 240deg 360deg)"></div>
<div class="a" style="left:284.3px;top:558.3px;width:9px;height:9px;border-radius:50%;background:#fff"></div>
<div class="a" style="left:285.6px;top:559.6px;width:6.4px;height:6.4px;border-radius:50%;background:#3c7ce8"></div>
<div class="a" style="left:306px;top:550px;width:30px;height:24px;background:#d4d0c8;border:1px solid;border-color:#fff #404040 #404040 #fff;box-shadow:inset -1px -1px 0 #808080"></div>
<div class="a" style="left:311px;top:555px;width:20px;height:14px;background:linear-gradient(180deg,#f8e49c,#f0cc60);border:.8px solid #c8a040;border-radius:1.5px"></div>
<div class="a" style="left:312px;top:553.5px;width:8px;height:3px;background:#f0cc60;border:.8px solid #c8a040;border-bottom:0"></div>
<div class="a" style="left:314px;top:563px;width:14px;height:7.5px;background:#a8d4f0;border:.8px solid #5898c8"></div>
<div class="a" style="left:337.5px;top:550px;width:30px;height:24px;background:#d4d0c8;border:1px solid;border-color:#fff #404040 #404040 #fff;box-shadow:inset -1px -1px 0 #808080"></div>
<div class="a" style="left:343px;top:553.5px;width:18.5px;height:18.5px;border-radius:50%;background:#18a4e8"></div>
<span class="t" style="left:347.6px;top:554.8px;font-size:14px;color:#fff;font-weight:bold;">S</span>
<div class="a" style="left:354.5px;top:565px;width:7.5px;height:7.5px;border-radius:50%;background:#78c83c;border:1.2px solid #fff"></div>
<div class="a" style="left:369px;top:550px;width:26px;height:24px;background:#d4d0c8;border:1px solid;border-color:#fff #404040 #404040 #fff;box-shadow:inset -1px -1px 0 #808080"></div>
<div class="a" style="left:377px;top:553.5px;width:14px;height:18px;background:#f4f6fa;border:.8px solid #8a9cc0"></div>
<div class="a" style="left:372.5px;top:557px;width:14px;height:12px;background:#2a5cb0;border-radius:1px"></div>
<span class="t" style="left:375.0px;top:557.7px;font-size:9.5px;color:#fff;font-weight:bold;">W</span>
<div class="a" style="left:396.5px;top:550px;width:1px;height:24px;background:#808080"></div><div class="a" style="left:397.5px;top:550px;width:1px;height:24px;background:#fff"></div>
<div class="a" style="left:401px;top:550px;width:30px;height:24px;background:#d4d0c8;border:1px solid;border-color:#fff #404040 #404040 #fff;box-shadow:inset -1px -1px 0 #808080"></div>
<div class="a" style="left:407px;top:553px;width:18px;height:17px;border-radius:45%;background:#7c58d8"></div>
<div class="a" style="left:409.5px;top:555.5px;width:13px;height:12px;border-radius:45%;background:#f4f0fc"></div>
<svg style="left:412px;top:557.5px" width="8" height="8" viewBox="0 0 8 8"><path d="M1.5.8c-.8.6-.8 1.8.2 3.4 1 1.5 2.3 2.6 3.5 3 .8.2 1.6-.4 1.8-1.2L5.4 4.8l-1 .7C3.6 5 3 4.2 2.6 3.4l.8-.8z" fill="#7c58d8"/></svg>
<div class="a" style="left:418.5px;top:565.5px;width:6.5px;height:7px;border-radius:1px 1px 3px 3px;background:linear-gradient(90deg,#3c78d8 50%,#f0c030 50%)"></div>
<div class="a" style="left:433px;top:550px;width:30.5px;height:24px;background:#d4d0c8;border:1px solid;border-color:#fff #404040 #404040 #fff;box-shadow:inset -1px -1px 0 #808080"></div>
<div class="a" style="left:439px;top:554px;width:14px;height:10px;background:#4a90e0;border:.8px solid #2a4a80"></div>
<div class="a" style="left:444px;top:558.5px;width:14px;height:10px;background:#58a0ec;border:.8px solid #2a4a80"></div>
<div class="a" style="left:446px;top:569px;width:10px;height:2.5px;background:#889;border-radius:1px"></div>
<!-- tray -->
<span class="t" style="left:905.8px;top:556.7px;font-size:8.4px;color:#111;transform:scaleX(0.908);">RU</span>
<div class="a" style="left:921.5px;top:550px;width:103px;height:24.5px;border:1px solid;border-color:#808080 #fff #fff #808080"></div>
<svg style="left:925.5px;top:558.5px" width="4.5" height="6" viewBox="0 0 4.5 6"><path d="M.4 2.6L2.25.6 4.1 2.6M.4 5.4L2.25 3.4 4.1 5.4" stroke="#000" stroke-width=".9" fill="none"/></svg>
<svg style="left:935.5px;top:557.5px" width="11.5" height="8.5" viewBox="0 0 11.5 8.5"><path d="M.5 8V6.5h1.8V8zM3.2 8V5h1.8v3zM5.9 8V3.3h1.8V8zM8.6 8V1h2.2v7z" fill="#f4f4f4" stroke="#8a8a8a" stroke-width=".6"/></svg>
<svg style="left:951px;top:556px" width="12" height="12" viewBox="0 0 12 12"><path d="M1.5 1v10" stroke="#666" stroke-width="1"/><path d="M2 1.5c2-1 3.5 1 6 0v5c-2.5 1-4-1-6 0z" fill="#f4f4f4" stroke="#888" stroke-width=".6"/><circle cx="8.3" cy="8.3" r="3.3" fill="#d8282c"/><path d="M6.9 6.9l2.8 2.8M9.7 6.9L6.9 9.7" stroke="#fff" stroke-width=".9"/></svg>
<span class="t" style="left:977.8px;top:551.5px;font-size:8.4px;color:#111;transform:scaleX(1.025);">13:40</span>
<span class="t" style="left:968.8px;top:562.9px;font-size:8.4px;color:#111;transform:scaleX(0.942);">07.04.2022</span>
<div class="a" style="left:1011.5px;top:558px;width:10px;height:7px;background:#3c84e0;border:.8px solid #1c3c80"></div><div class="a" style="left:1013.5px;top:565.5px;width:6px;height:1.5px;background:#556"></div>

</body>
</html>
